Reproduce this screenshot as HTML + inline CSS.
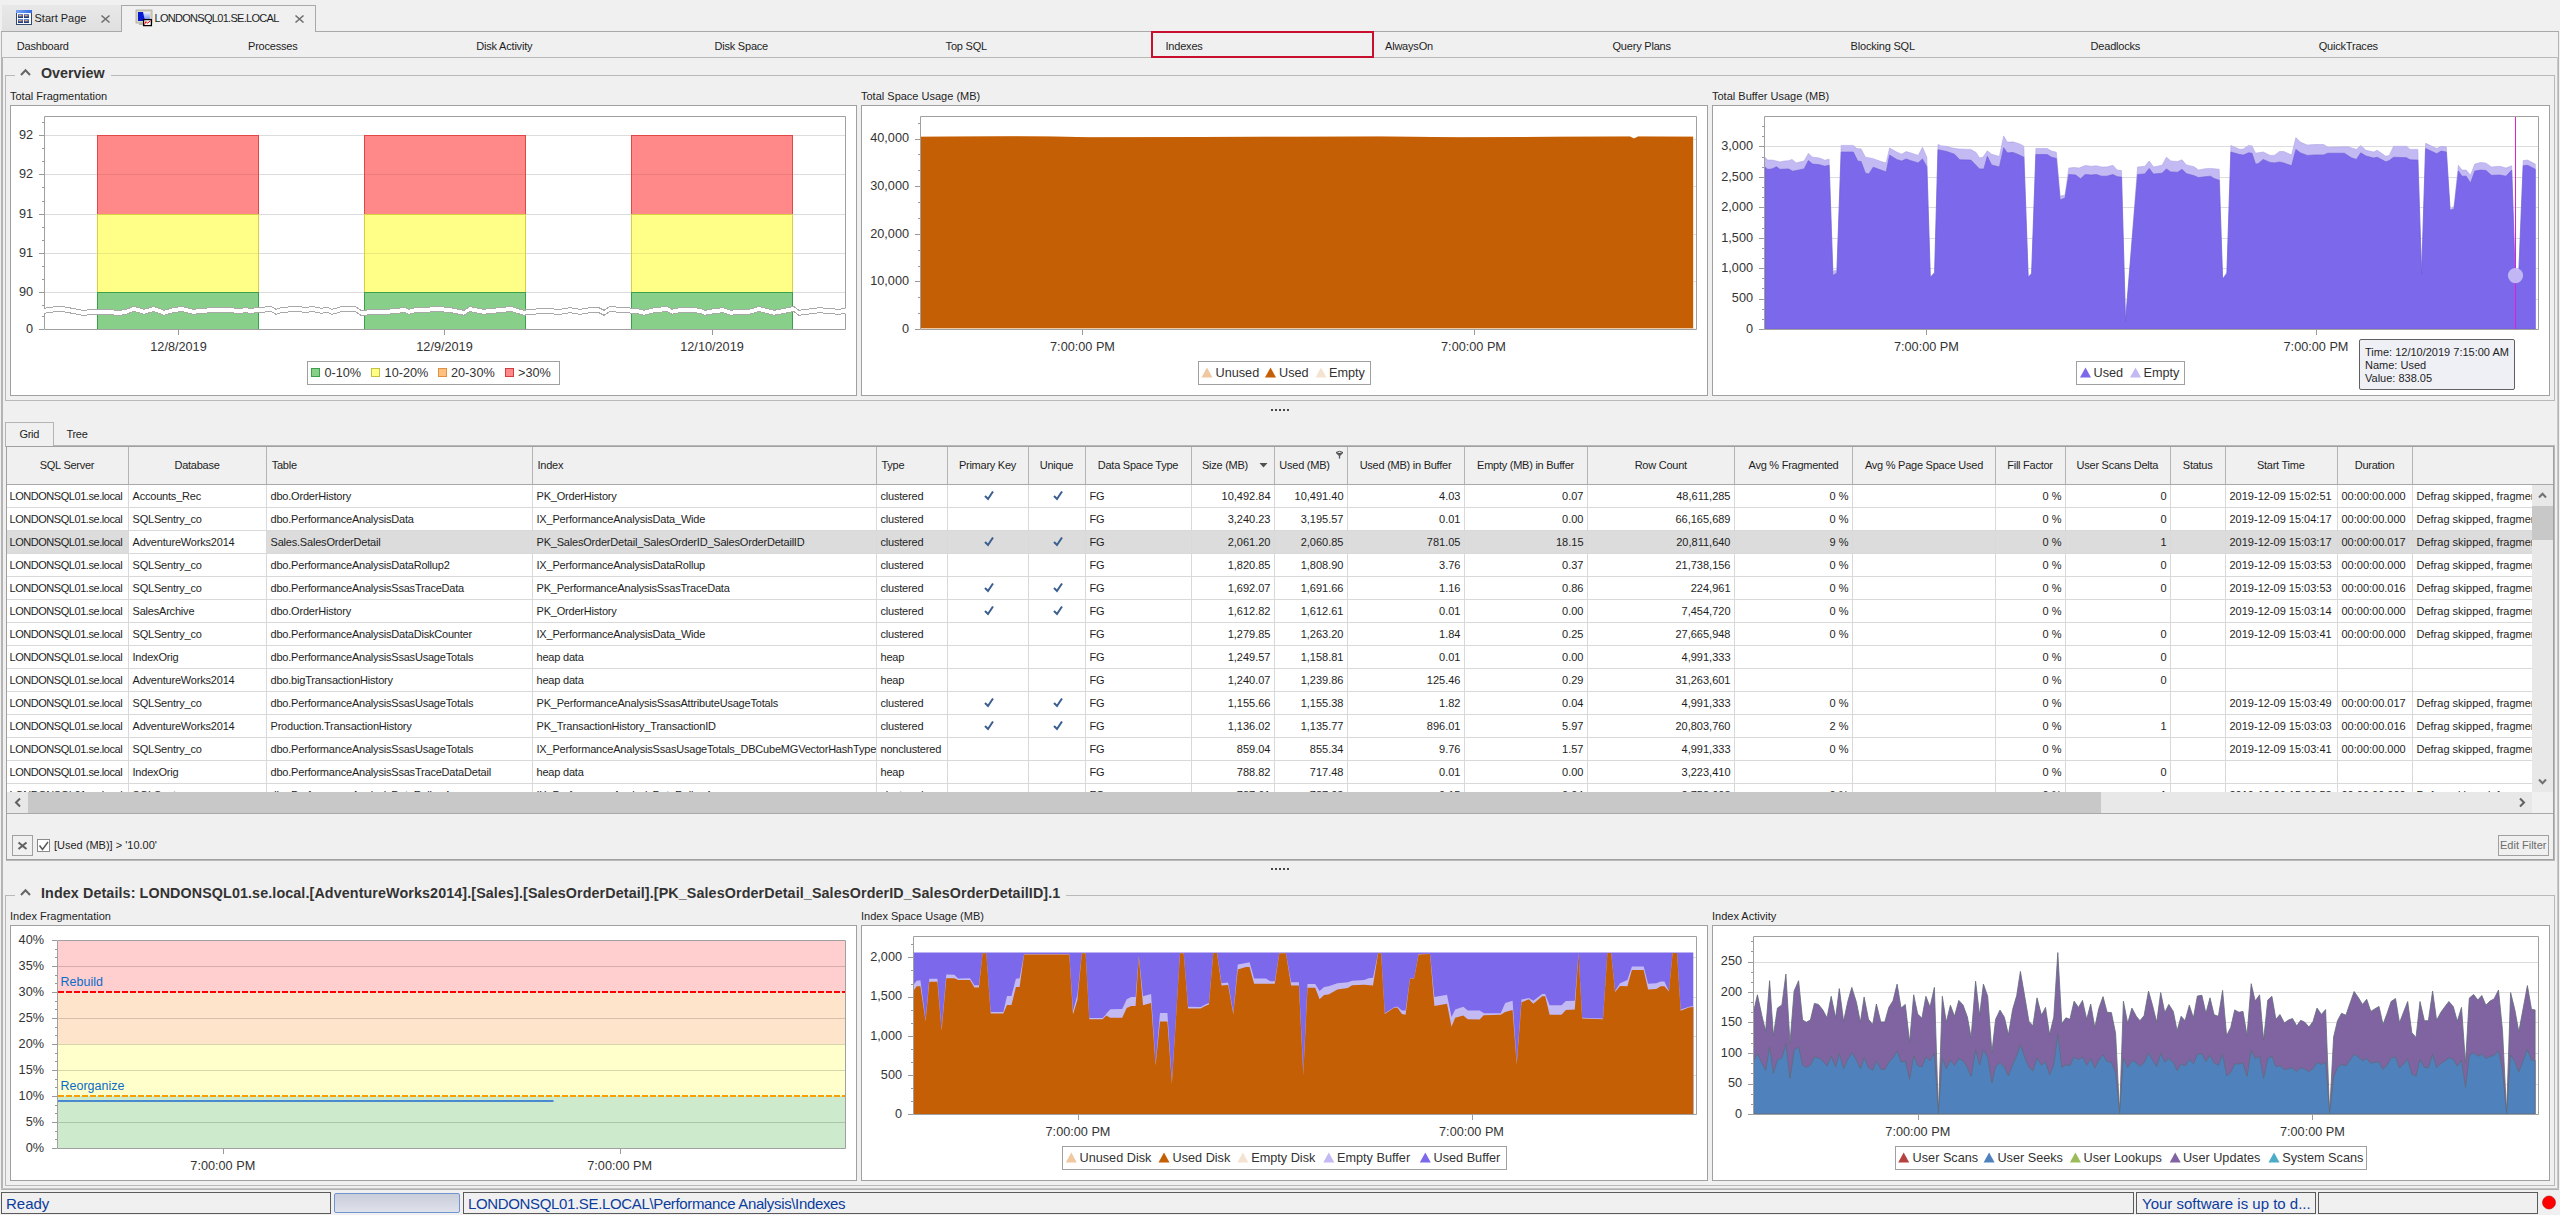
<!DOCTYPE html>
<html><head><meta charset="utf-8"><title>Indexes</title>
<style>
html,body{margin:0;padding:0;}
body{width:2560px;height:1215px;overflow:hidden;position:relative;background:#f0f0f0;font-family:"Liberation Sans", sans-serif;}
.t{position:absolute;white-space:pre;line-height:1;}
.b{position:absolute;box-sizing:border-box;}
.c{position:absolute;box-sizing:border-box;height:23px;line-height:23px;overflow:hidden;white-space:pre;font-size:11px;color:#1e1e1e;}
svg{position:absolute;left:0;top:0;}
</style></head><body>
<div class="b" style="left:2px;top:5px;width:119px;height:26px;background:linear-gradient(#e8e8e8,#e0e0e0);"></div><div class="b" style="left:121px;top:5px;width:195px;height:27px;background:#f0f0f0;border:1px solid #a9a9a9;border-bottom:none;"></div><div class="b" style="left:1px;top:31px;width:120px;height:1px;background:#a9a9a9;"></div><div class="b" style="left:316px;top:31px;width:2243px;height:1px;background:#a9a9a9;"></div><svg width="2560" height="40" style="left:0;top:0">
<defs><linearGradient id="tb" x1="0" y1="0" x2="1" y2="0"><stop offset="0" stop-color="#7aa4f4"/><stop offset="1" stop-color="#2f6ae0"/></linearGradient>
<linearGradient id="tl" x1="0" y1="0" x2="0" y2="1"><stop offset="0" stop-color="#6f8fd0"/><stop offset="1" stop-color="#17306e"/></linearGradient></defs>
<rect x="16.5" y="10.5" width="15" height="14" fill="#f4f8ff" stroke="#34496e" stroke-width="1"/>
<rect x="16" y="10" width="16" height="3" fill="url(#tb)"/>
<rect x="18" y="14" width="5" height="4" fill="url(#tl)"/><rect x="24" y="14" width="5" height="4" fill="url(#tl)"/>
<rect x="18" y="19" width="5" height="4" fill="url(#tl)"/><rect x="24" y="19" width="5" height="4" fill="url(#tl)"/>
<rect x="19" y="15" width="2.5" height="1.3" fill="#f59a50"/><rect x="25" y="15" width="2.5" height="1.3" fill="#f59a50"/>
<rect x="19" y="20" width="2.5" height="1.3" fill="#f59a50"/><rect x="25" y="20" width="2.5" height="1.3" fill="#f59a50"/>
<path d="M101.5 15.5 L109.5 22.5 M109.5 15.5 L101.5 22.5" stroke="#6e6e6e" stroke-width="1.6"/>
<path d="M295.5 15.5 L303.5 22.5 M303.5 15.5 L295.5 22.5" stroke="#6e6e6e" stroke-width="1.6"/>
<defs><linearGradient id="scr" x1="0" y1="0" x2="0" y2="1"><stop offset="0" stop-color="#eef2ff"/><stop offset="1" stop-color="#5f7ef0"/></linearGradient></defs>
<rect x="136" y="10" width="16" height="13" fill="#d8d5c4" stroke="#a8a69a" stroke-width="0.8"/>
<rect x="138" y="12" width="12" height="9" fill="url(#scr)"/>
<path d="M138 12 L143 12 L145 21 L138 21 Z" fill="#0818d0"/>
<rect x="139" y="23" width="5" height="2" fill="#b8b6aa"/>
<rect x="143.6" y="19.6" width="7.8" height="6" fill="#fff" stroke="#000" stroke-width="1.3"/>
<path d="M144.5 24.5 L146 21.5 L147.5 23.3 L150.5 20.6" stroke="#f00" stroke-width="1" fill="none"/>
</svg><div class="t" style="left:34.5px;top:12.7px;font-size:11px;color:#1e1e1e;letter-spacing:0px;">Start Page</div><div class="t" style="left:154.5px;top:12.7px;font-size:11px;color:#1e1e1e;letter-spacing:-0.7px;">LONDONSQL01.SE.LOCAL</div><div class="b" style="left:1px;top:32px;width:1px;height:1160px;background:#b4b4b4;"></div><div class="b" style="left:2px;top:57px;width:1px;height:1135px;background:#b4b4b4;"></div><div class="b" style="left:1px;top:57px;width:2558px;height:1px;background:#b9b9b9;"></div><div class="b" style="left:2558px;top:32px;width:1px;height:1160px;background:#b4b4b4;"></div><div class="b" style="left:2557px;top:57px;width:1px;height:1131px;background:#c8c8c8;"></div><div class="t" style="left:16.75px;top:40.7px;font-size:11px;color:#1e1e1e;letter-spacing:-0.2px;">Dashboard</div><div class="t" style="left:248px;top:40.7px;font-size:11px;color:#1e1e1e;letter-spacing:-0.2px;">Processes</div><div class="t" style="left:476.25px;top:40.7px;font-size:11px;color:#1e1e1e;letter-spacing:-0.2px;">Disk Activity</div><div class="t" style="left:714.4px;top:40.7px;font-size:11px;color:#1e1e1e;letter-spacing:-0.2px;">Disk Space</div><div class="t" style="left:945.6px;top:40.7px;font-size:11px;color:#1e1e1e;letter-spacing:-0.2px;">Top SQL</div><div class="t" style="left:1165.5px;top:40.7px;font-size:11px;color:#1e1e1e;letter-spacing:-0.2px;">Indexes</div><div class="t" style="left:1385px;top:40.7px;font-size:11px;color:#1e1e1e;letter-spacing:-0.2px;">AlwaysOn</div><div class="t" style="left:1612.5px;top:40.7px;font-size:11px;color:#1e1e1e;letter-spacing:-0.2px;">Query Plans</div><div class="t" style="left:1850.6px;top:40.7px;font-size:11px;color:#1e1e1e;letter-spacing:-0.2px;">Blocking SQL</div><div class="t" style="left:2090.6px;top:40.7px;font-size:11px;color:#1e1e1e;letter-spacing:-0.2px;">Deadlocks</div><div class="t" style="left:2318.75px;top:40.7px;font-size:11px;color:#1e1e1e;letter-spacing:-0.2px;">QuickTraces</div><div class="b" style="left:1151px;top:31px;width:223px;height:27px;border:2px solid #c8102e;"></div><div class="b" style="left:5px;top:75px;width:1px;height:326px;background:#b9b9b9;"></div><div class="b" style="left:5px;top:400px;width:2550px;height:1px;background:#b9b9b9;"></div><div class="b" style="left:2554px;top:75px;width:1px;height:326px;background:#b9b9b9;"></div><div class="b" style="left:5px;top:75px;width:10px;height:1px;background:#b9b9b9;"></div><div class="b" style="left:111px;top:75px;width:2444px;height:1px;background:#b9b9b9;"></div><svg width="40" height="90" style="left:0;top:0"><path d="M21 75 L25.5 70.3 L30 75" stroke="#666" stroke-width="2" fill="none"/></svg><div class="t" style="left:41px;top:66.4px;font-size:14.3px;color:#333333;font-weight:700;">Overview</div><div class="b" style="left:5px;top:895px;width:1px;height:291px;background:#b9b9b9;"></div><div class="b" style="left:5px;top:1185px;width:2550px;height:1px;background:#b9b9b9;"></div><div class="b" style="left:2554px;top:895px;width:1px;height:291px;background:#b9b9b9;"></div><div class="b" style="left:5px;top:895px;width:10px;height:1px;background:#b9b9b9;"></div><div class="b" style="left:1066px;top:895px;width:1489px;height:1px;background:#b9b9b9;"></div><svg width="40" height="910" style="left:0;top:0"><path d="M21 895 L25.5 890.3 L30 895" stroke="#666" stroke-width="2" fill="none"/></svg><div class="t" style="left:41px;top:886.4px;font-size:14.3px;color:#333333;font-weight:700;letter-spacing:0.11px;">Index Details: LONDONSQL01.se.local.[AdventureWorks2014].[Sales].[SalesOrderDetail].[PK_SalesOrderDetail_SalesOrderID_SalesOrderDetailID].1</div><div class="b" style="left:1271px;top:409px;width:2px;height:2px;background:#484848;"></div><div class="b" style="left:1275px;top:409px;width:2px;height:2px;background:#484848;"></div><div class="b" style="left:1279px;top:409px;width:2px;height:2px;background:#484848;"></div><div class="b" style="left:1283px;top:409px;width:2px;height:2px;background:#484848;"></div><div class="b" style="left:1287px;top:409px;width:2px;height:2px;background:#484848;"></div><div class="b" style="left:1271px;top:868px;width:2px;height:2px;background:#484848;"></div><div class="b" style="left:1275px;top:868px;width:2px;height:2px;background:#484848;"></div><div class="b" style="left:1279px;top:868px;width:2px;height:2px;background:#484848;"></div><div class="b" style="left:1283px;top:868px;width:2px;height:2px;background:#484848;"></div><div class="b" style="left:1287px;top:868px;width:2px;height:2px;background:#484848;"></div><div class="t" style="left:10px;top:90.7px;font-size:11px;color:#1e1e1e;">Total Fragmentation</div><div class="b" style="left:10px;top:105px;width:847px;height:291px;background:#fff;border:1px solid #a0a0a0;"></div><div class="b" style="left:307px;top:361px;width:253px;height:24px;background:#fff;border:1px solid #a0a0a0;"></div><div class="t" style="left:861px;top:90.7px;font-size:11px;color:#1e1e1e;">Total Space Usage (MB)</div><div class="b" style="left:861px;top:105px;width:847px;height:291px;background:#fff;border:1px solid #a0a0a0;"></div><div class="b" style="left:1198px;top:361px;width:173px;height:24px;background:#fff;border:1px solid #a0a0a0;"></div><div class="t" style="left:1712px;top:90.7px;font-size:11px;color:#1e1e1e;">Total Buffer Usage (MB)</div><div class="b" style="left:1712px;top:105px;width:838px;height:291px;background:#fff;border:1px solid #a0a0a0;"></div><div class="b" style="left:2076px;top:361px;width:109px;height:24px;background:#fff;border:1px solid #a0a0a0;"></div><div class="b" style="left:5px;top:422px;width:49px;height:25px;background:#f0f0f0;border:1px solid #b4b4b4;border-bottom:none;"></div><div class="t" style="left:19.5px;top:428.7px;font-size:11px;color:#1e1e1e;letter-spacing:-0.3px;">Grid</div><div class="t" style="left:66.5px;top:428.7px;font-size:11px;color:#1e1e1e;letter-spacing:-0.3px;">Tree</div><div class="b" style="left:6px;top:446px;width:2548px;height:414px;background:#fff;border:1px solid #a0a0a0;"></div><div class="b" style="left:7px;top:447px;width:2546px;height:37px;background:#f0f0f0;"></div><div class="b" style="left:54px;top:445px;width:2500px;height:1px;background:#b8b8b8;"></div><div class="b" style="left:2554px;top:445px;width:1px;height:415px;background:#b8b8b8;"></div><div class="b" style="left:6px;top:860px;width:2549px;height:1px;background:#b8b8b8;"></div><div class="b" style="left:7px;top:484px;width:2546px;height:1px;background:#a9a9a9;"></div><div class="b" style="left:128px;top:447px;width:1px;height:37px;background:#b4b4b4;"></div><div class="b" style="left:266px;top:447px;width:1px;height:37px;background:#b4b4b4;"></div><div class="b" style="left:532px;top:447px;width:1px;height:37px;background:#b4b4b4;"></div><div class="b" style="left:876px;top:447px;width:1px;height:37px;background:#b4b4b4;"></div><div class="b" style="left:947px;top:447px;width:1px;height:37px;background:#b4b4b4;"></div><div class="b" style="left:1028px;top:447px;width:1px;height:37px;background:#b4b4b4;"></div><div class="b" style="left:1085px;top:447px;width:1px;height:37px;background:#b4b4b4;"></div><div class="b" style="left:1191px;top:447px;width:1px;height:37px;background:#b4b4b4;"></div><div class="b" style="left:1274px;top:447px;width:1px;height:37px;background:#b4b4b4;"></div><div class="b" style="left:1347px;top:447px;width:1px;height:37px;background:#b4b4b4;"></div><div class="b" style="left:1464px;top:447px;width:1px;height:37px;background:#b4b4b4;"></div><div class="b" style="left:1587px;top:447px;width:1px;height:37px;background:#b4b4b4;"></div><div class="b" style="left:1734px;top:447px;width:1px;height:37px;background:#b4b4b4;"></div><div class="b" style="left:1852px;top:447px;width:1px;height:37px;background:#b4b4b4;"></div><div class="b" style="left:1995px;top:447px;width:1px;height:37px;background:#b4b4b4;"></div><div class="b" style="left:2065px;top:447px;width:1px;height:37px;background:#b4b4b4;"></div><div class="b" style="left:2170px;top:447px;width:1px;height:37px;background:#b4b4b4;"></div><div class="b" style="left:2225px;top:447px;width:1px;height:37px;background:#b4b4b4;"></div><div class="b" style="left:2337px;top:447px;width:1px;height:37px;background:#b4b4b4;"></div><div class="b" style="left:2412px;top:447px;width:1px;height:37px;background:#b4b4b4;"></div><div class="t" style="left:-233.0px;width:600px;text-align:center;top:460.2px;font-size:11px;color:#1e1e1e;letter-spacing:-0.25px;">SQL Server</div><div class="t" style="left:-103.0px;width:600px;text-align:center;top:460.2px;font-size:11px;color:#1e1e1e;letter-spacing:-0.25px;">Database</div><div class="t" style="left:271.75px;top:460.2px;font-size:11px;color:#1e1e1e;letter-spacing:-0.25px;">Table</div><div class="t" style="left:537.5px;top:460.2px;font-size:11px;color:#1e1e1e;letter-spacing:-0.25px;">Index</div><div class="t" style="left:881.5px;top:460.2px;font-size:11px;color:#1e1e1e;letter-spacing:-0.25px;">Type</div><div class="t" style="left:687.5px;width:600px;text-align:center;top:460.2px;font-size:11px;color:#1e1e1e;letter-spacing:-0.25px;">Primary Key</div><div class="t" style="left:756.5px;width:600px;text-align:center;top:460.2px;font-size:11px;color:#1e1e1e;letter-spacing:-0.25px;">Unique</div><div class="t" style="left:838.0px;width:600px;text-align:center;top:460.2px;font-size:11px;color:#1e1e1e;letter-spacing:-0.25px;">Data Space Type</div><div class="t" style="left:925.0px;width:600px;text-align:center;top:460.2px;font-size:11px;color:#1e1e1e;letter-spacing:-0.25px;">Size (MB)</div><div class="t" style="left:1004.5px;width:600px;text-align:center;top:460.2px;font-size:11px;color:#1e1e1e;letter-spacing:-0.25px;">Used (MB)</div><div class="t" style="left:1105.5px;width:600px;text-align:center;top:460.2px;font-size:11px;color:#1e1e1e;letter-spacing:-0.25px;">Used (MB) in Buffer</div><div class="t" style="left:1225.5px;width:600px;text-align:center;top:460.2px;font-size:11px;color:#1e1e1e;letter-spacing:-0.25px;">Empty (MB) in Buffer</div><div class="t" style="left:1360.75px;width:600px;text-align:center;top:460.2px;font-size:11px;color:#1e1e1e;letter-spacing:-0.25px;">Row Count</div><div class="t" style="left:1493.5px;width:600px;text-align:center;top:460.2px;font-size:11px;color:#1e1e1e;letter-spacing:-0.25px;">Avg % Fragmented</div><div class="t" style="left:1624.0px;width:600px;text-align:center;top:460.2px;font-size:11px;color:#1e1e1e;letter-spacing:-0.25px;">Avg % Page Space Used</div><div class="t" style="left:1730.0px;width:600px;text-align:center;top:460.2px;font-size:11px;color:#1e1e1e;letter-spacing:-0.25px;">Fill Factor</div><div class="t" style="left:1817.4px;width:600px;text-align:center;top:460.2px;font-size:11px;color:#1e1e1e;letter-spacing:-0.25px;">User Scans Delta</div><div class="t" style="left:1897.65px;width:600px;text-align:center;top:460.2px;font-size:11px;color:#1e1e1e;letter-spacing:-0.25px;">Status</div><div class="t" style="left:1980.75px;width:600px;text-align:center;top:460.2px;font-size:11px;color:#1e1e1e;letter-spacing:-0.25px;">Start Time</div><div class="t" style="left:2074.5px;width:600px;text-align:center;top:460.2px;font-size:11px;color:#1e1e1e;letter-spacing:-0.25px;">Duration</div><svg width="2560" height="500" style="left:0;top:0"><path d="M1259.5 463 L1267.5 463 L1263.5 467.5 Z" fill="#505050"/><path d="M1336 452.5 Q1339.5 450 1343 452.5 Q1339.5 454.6 1336 452.5 Z" fill="none" stroke="#555" stroke-width="1"/><path d="M1336.3 453 L1339.5 456 L1342.7 453" fill="#555" stroke="#555" stroke-width="0.8"/><path d="M1339.5 455.5 V458.5" stroke="#555" stroke-width="1.3"/></svg><div style="position:absolute;left:0;top:0;width:2560px;height:1215px;clip-path:inset(485px 27px 423px 7px);"><div class="c" style="left:7px;top:485px;width:121px;letter-spacing:-0.45px;padding-left:2.5px;">LONDONSQL01.se.local</div><div class="c" style="left:129px;top:485px;width:137px;letter-spacing:-0.2px;padding-left:3.5px;">Accounts_Rec</div><div class="c" style="left:267px;top:485px;width:265px;letter-spacing:-0.2px;padding-left:3.5px;">dbo.OrderHistory</div><div class="c" style="left:533px;top:485px;width:343px;letter-spacing:-0.2px;padding-left:3.5px;">PK_OrderHistory</div><div class="c" style="left:877px;top:485px;width:70px;letter-spacing:-0.2px;padding-left:3.5px;">clustered</div><svg width="14" height="14" style="position:absolute;left:982.5px;top:489px"><path d="M2 7 L5 10 L10 2.5" fill="none" stroke="#3a5f8f" stroke-width="2"/></svg><svg width="14" height="14" style="position:absolute;left:1051.5px;top:489px"><path d="M2 7 L5 10 L10 2.5" fill="none" stroke="#3a5f8f" stroke-width="2"/></svg><div class="c" style="left:1086px;top:485px;width:105px;letter-spacing:-0.2px;padding-left:3.5px;">FG</div><div class="c" style="left:1192px;top:485px;width:82px;letter-spacing:0px;text-align:right;padding-right:3.5px;">10,492.84</div><div class="c" style="left:1275px;top:485px;width:72px;letter-spacing:0px;text-align:right;padding-right:3.5px;">10,491.40</div><div class="c" style="left:1348px;top:485px;width:116px;letter-spacing:0px;text-align:right;padding-right:3.5px;">4.03</div><div class="c" style="left:1465px;top:485px;width:122px;letter-spacing:0px;text-align:right;padding-right:3.5px;">0.07</div><div class="c" style="left:1588px;top:485px;width:146px;letter-spacing:0px;text-align:right;padding-right:3.5px;">48,611,285</div><div class="c" style="left:1735px;top:485px;width:117px;letter-spacing:0px;text-align:right;padding-right:3.5px;">0 %</div><div class="c" style="left:1996px;top:485px;width:69px;letter-spacing:0px;text-align:right;padding-right:3.5px;">0 %</div><div class="c" style="left:2066px;top:485px;width:104px;letter-spacing:0px;text-align:right;padding-right:3.5px;">0</div><div class="c" style="left:2226px;top:485px;width:111px;letter-spacing:0px;padding-left:3.5px;">2019-12-09 15:02:51</div><div class="c" style="left:2338px;top:485px;width:74px;letter-spacing:0px;padding-left:3.5px;">00:00:00.000</div><div class="c" style="left:2413px;top:485px;width:140px;letter-spacing:0px;padding-left:3.5px;">Defrag skipped, fragmentation level below threshold</div><div class="b" style="left:7px;top:507px;width:2525px;height:1px;background:#d9d9d9"></div><div class="c" style="left:7px;top:508px;width:121px;letter-spacing:-0.45px;padding-left:2.5px;">LONDONSQL01.se.local</div><div class="c" style="left:129px;top:508px;width:137px;letter-spacing:-0.2px;padding-left:3.5px;">SQLSentry_co</div><div class="c" style="left:267px;top:508px;width:265px;letter-spacing:-0.2px;padding-left:3.5px;">dbo.PerformanceAnalysisData</div><div class="c" style="left:533px;top:508px;width:343px;letter-spacing:-0.2px;padding-left:3.5px;">IX_PerformanceAnalysisData_Wide</div><div class="c" style="left:877px;top:508px;width:70px;letter-spacing:-0.2px;padding-left:3.5px;">clustered</div><div class="c" style="left:1086px;top:508px;width:105px;letter-spacing:-0.2px;padding-left:3.5px;">FG</div><div class="c" style="left:1192px;top:508px;width:82px;letter-spacing:0px;text-align:right;padding-right:3.5px;">3,240.23</div><div class="c" style="left:1275px;top:508px;width:72px;letter-spacing:0px;text-align:right;padding-right:3.5px;">3,195.57</div><div class="c" style="left:1348px;top:508px;width:116px;letter-spacing:0px;text-align:right;padding-right:3.5px;">0.01</div><div class="c" style="left:1465px;top:508px;width:122px;letter-spacing:0px;text-align:right;padding-right:3.5px;">0.00</div><div class="c" style="left:1588px;top:508px;width:146px;letter-spacing:0px;text-align:right;padding-right:3.5px;">66,165,689</div><div class="c" style="left:1735px;top:508px;width:117px;letter-spacing:0px;text-align:right;padding-right:3.5px;">0 %</div><div class="c" style="left:1996px;top:508px;width:69px;letter-spacing:0px;text-align:right;padding-right:3.5px;">0 %</div><div class="c" style="left:2066px;top:508px;width:104px;letter-spacing:0px;text-align:right;padding-right:3.5px;">0</div><div class="c" style="left:2226px;top:508px;width:111px;letter-spacing:0px;padding-left:3.5px;">2019-12-09 15:04:17</div><div class="c" style="left:2338px;top:508px;width:74px;letter-spacing:0px;padding-left:3.5px;">00:00:00.000</div><div class="c" style="left:2413px;top:508px;width:140px;letter-spacing:0px;padding-left:3.5px;">Defrag skipped, fragmentation level below threshold</div><div class="b" style="left:7px;top:530px;width:2525px;height:1px;background:#d9d9d9"></div><div class="b" style="left:7px;top:531px;width:2525px;height:22px;background:#dcdcdc"></div><div class="b" style="left:129px;top:531px;width:137px;height:22px;background:#fff"></div><div class="c" style="left:7px;top:531px;width:121px;letter-spacing:-0.45px;padding-left:2.5px;">LONDONSQL01.se.local</div><div class="c" style="left:129px;top:531px;width:137px;letter-spacing:-0.2px;padding-left:3.5px;">AdventureWorks2014</div><div class="c" style="left:267px;top:531px;width:265px;letter-spacing:-0.2px;padding-left:3.5px;">Sales.SalesOrderDetail</div><div class="c" style="left:533px;top:531px;width:343px;letter-spacing:-0.2px;padding-left:3.5px;">PK_SalesOrderDetail_SalesOrderID_SalesOrderDetailID</div><div class="c" style="left:877px;top:531px;width:70px;letter-spacing:-0.2px;padding-left:3.5px;">clustered</div><svg width="14" height="14" style="position:absolute;left:982.5px;top:535px"><path d="M2 7 L5 10 L10 2.5" fill="none" stroke="#3a5f8f" stroke-width="2"/></svg><svg width="14" height="14" style="position:absolute;left:1051.5px;top:535px"><path d="M2 7 L5 10 L10 2.5" fill="none" stroke="#3a5f8f" stroke-width="2"/></svg><div class="c" style="left:1086px;top:531px;width:105px;letter-spacing:-0.2px;padding-left:3.5px;">FG</div><div class="c" style="left:1192px;top:531px;width:82px;letter-spacing:0px;text-align:right;padding-right:3.5px;">2,061.20</div><div class="c" style="left:1275px;top:531px;width:72px;letter-spacing:0px;text-align:right;padding-right:3.5px;">2,060.85</div><div class="c" style="left:1348px;top:531px;width:116px;letter-spacing:0px;text-align:right;padding-right:3.5px;">781.05</div><div class="c" style="left:1465px;top:531px;width:122px;letter-spacing:0px;text-align:right;padding-right:3.5px;">18.15</div><div class="c" style="left:1588px;top:531px;width:146px;letter-spacing:0px;text-align:right;padding-right:3.5px;">20,811,640</div><div class="c" style="left:1735px;top:531px;width:117px;letter-spacing:0px;text-align:right;padding-right:3.5px;">9 %</div><div class="c" style="left:1996px;top:531px;width:69px;letter-spacing:0px;text-align:right;padding-right:3.5px;">0 %</div><div class="c" style="left:2066px;top:531px;width:104px;letter-spacing:0px;text-align:right;padding-right:3.5px;">1</div><div class="c" style="left:2226px;top:531px;width:111px;letter-spacing:0px;padding-left:3.5px;">2019-12-09 15:03:17</div><div class="c" style="left:2338px;top:531px;width:74px;letter-spacing:0px;padding-left:3.5px;">00:00:00.017</div><div class="c" style="left:2413px;top:531px;width:140px;letter-spacing:0px;padding-left:3.5px;">Defrag skipped, fragmentation level below threshold</div><div class="b" style="left:7px;top:553px;width:2525px;height:1px;background:#d9d9d9"></div><div class="c" style="left:7px;top:554px;width:121px;letter-spacing:-0.45px;padding-left:2.5px;">LONDONSQL01.se.local</div><div class="c" style="left:129px;top:554px;width:137px;letter-spacing:-0.2px;padding-left:3.5px;">SQLSentry_co</div><div class="c" style="left:267px;top:554px;width:265px;letter-spacing:-0.2px;padding-left:3.5px;">dbo.PerformanceAnalysisDataRollup2</div><div class="c" style="left:533px;top:554px;width:343px;letter-spacing:-0.2px;padding-left:3.5px;">IX_PerformanceAnalysisDataRollup</div><div class="c" style="left:877px;top:554px;width:70px;letter-spacing:-0.2px;padding-left:3.5px;">clustered</div><div class="c" style="left:1086px;top:554px;width:105px;letter-spacing:-0.2px;padding-left:3.5px;">FG</div><div class="c" style="left:1192px;top:554px;width:82px;letter-spacing:0px;text-align:right;padding-right:3.5px;">1,820.85</div><div class="c" style="left:1275px;top:554px;width:72px;letter-spacing:0px;text-align:right;padding-right:3.5px;">1,808.90</div><div class="c" style="left:1348px;top:554px;width:116px;letter-spacing:0px;text-align:right;padding-right:3.5px;">3.76</div><div class="c" style="left:1465px;top:554px;width:122px;letter-spacing:0px;text-align:right;padding-right:3.5px;">0.37</div><div class="c" style="left:1588px;top:554px;width:146px;letter-spacing:0px;text-align:right;padding-right:3.5px;">21,738,156</div><div class="c" style="left:1735px;top:554px;width:117px;letter-spacing:0px;text-align:right;padding-right:3.5px;">0 %</div><div class="c" style="left:1996px;top:554px;width:69px;letter-spacing:0px;text-align:right;padding-right:3.5px;">0 %</div><div class="c" style="left:2066px;top:554px;width:104px;letter-spacing:0px;text-align:right;padding-right:3.5px;">0</div><div class="c" style="left:2226px;top:554px;width:111px;letter-spacing:0px;padding-left:3.5px;">2019-12-09 15:03:53</div><div class="c" style="left:2338px;top:554px;width:74px;letter-spacing:0px;padding-left:3.5px;">00:00:00.000</div><div class="c" style="left:2413px;top:554px;width:140px;letter-spacing:0px;padding-left:3.5px;">Defrag skipped, fragmentation level below threshold</div><div class="b" style="left:7px;top:576px;width:2525px;height:1px;background:#d9d9d9"></div><div class="c" style="left:7px;top:577px;width:121px;letter-spacing:-0.45px;padding-left:2.5px;">LONDONSQL01.se.local</div><div class="c" style="left:129px;top:577px;width:137px;letter-spacing:-0.2px;padding-left:3.5px;">SQLSentry_co</div><div class="c" style="left:267px;top:577px;width:265px;letter-spacing:-0.2px;padding-left:3.5px;">dbo.PerformanceAnalysisSsasTraceData</div><div class="c" style="left:533px;top:577px;width:343px;letter-spacing:-0.2px;padding-left:3.5px;">PK_PerformanceAnalysisSsasTraceData</div><div class="c" style="left:877px;top:577px;width:70px;letter-spacing:-0.2px;padding-left:3.5px;">clustered</div><svg width="14" height="14" style="position:absolute;left:982.5px;top:581px"><path d="M2 7 L5 10 L10 2.5" fill="none" stroke="#3a5f8f" stroke-width="2"/></svg><svg width="14" height="14" style="position:absolute;left:1051.5px;top:581px"><path d="M2 7 L5 10 L10 2.5" fill="none" stroke="#3a5f8f" stroke-width="2"/></svg><div class="c" style="left:1086px;top:577px;width:105px;letter-spacing:-0.2px;padding-left:3.5px;">FG</div><div class="c" style="left:1192px;top:577px;width:82px;letter-spacing:0px;text-align:right;padding-right:3.5px;">1,692.07</div><div class="c" style="left:1275px;top:577px;width:72px;letter-spacing:0px;text-align:right;padding-right:3.5px;">1,691.66</div><div class="c" style="left:1348px;top:577px;width:116px;letter-spacing:0px;text-align:right;padding-right:3.5px;">1.16</div><div class="c" style="left:1465px;top:577px;width:122px;letter-spacing:0px;text-align:right;padding-right:3.5px;">0.86</div><div class="c" style="left:1588px;top:577px;width:146px;letter-spacing:0px;text-align:right;padding-right:3.5px;">224,961</div><div class="c" style="left:1735px;top:577px;width:117px;letter-spacing:0px;text-align:right;padding-right:3.5px;">0 %</div><div class="c" style="left:1996px;top:577px;width:69px;letter-spacing:0px;text-align:right;padding-right:3.5px;">0 %</div><div class="c" style="left:2066px;top:577px;width:104px;letter-spacing:0px;text-align:right;padding-right:3.5px;">0</div><div class="c" style="left:2226px;top:577px;width:111px;letter-spacing:0px;padding-left:3.5px;">2019-12-09 15:03:53</div><div class="c" style="left:2338px;top:577px;width:74px;letter-spacing:0px;padding-left:3.5px;">00:00:00.016</div><div class="c" style="left:2413px;top:577px;width:140px;letter-spacing:0px;padding-left:3.5px;">Defrag skipped, fragmentation level below threshold</div><div class="b" style="left:7px;top:599px;width:2525px;height:1px;background:#d9d9d9"></div><div class="c" style="left:7px;top:600px;width:121px;letter-spacing:-0.45px;padding-left:2.5px;">LONDONSQL01.se.local</div><div class="c" style="left:129px;top:600px;width:137px;letter-spacing:-0.2px;padding-left:3.5px;">SalesArchive</div><div class="c" style="left:267px;top:600px;width:265px;letter-spacing:-0.2px;padding-left:3.5px;">dbo.OrderHistory</div><div class="c" style="left:533px;top:600px;width:343px;letter-spacing:-0.2px;padding-left:3.5px;">PK_OrderHistory</div><div class="c" style="left:877px;top:600px;width:70px;letter-spacing:-0.2px;padding-left:3.5px;">clustered</div><svg width="14" height="14" style="position:absolute;left:982.5px;top:604px"><path d="M2 7 L5 10 L10 2.5" fill="none" stroke="#3a5f8f" stroke-width="2"/></svg><svg width="14" height="14" style="position:absolute;left:1051.5px;top:604px"><path d="M2 7 L5 10 L10 2.5" fill="none" stroke="#3a5f8f" stroke-width="2"/></svg><div class="c" style="left:1086px;top:600px;width:105px;letter-spacing:-0.2px;padding-left:3.5px;">FG</div><div class="c" style="left:1192px;top:600px;width:82px;letter-spacing:0px;text-align:right;padding-right:3.5px;">1,612.82</div><div class="c" style="left:1275px;top:600px;width:72px;letter-spacing:0px;text-align:right;padding-right:3.5px;">1,612.61</div><div class="c" style="left:1348px;top:600px;width:116px;letter-spacing:0px;text-align:right;padding-right:3.5px;">0.01</div><div class="c" style="left:1465px;top:600px;width:122px;letter-spacing:0px;text-align:right;padding-right:3.5px;">0.00</div><div class="c" style="left:1588px;top:600px;width:146px;letter-spacing:0px;text-align:right;padding-right:3.5px;">7,454,720</div><div class="c" style="left:1735px;top:600px;width:117px;letter-spacing:0px;text-align:right;padding-right:3.5px;">0 %</div><div class="c" style="left:1996px;top:600px;width:69px;letter-spacing:0px;text-align:right;padding-right:3.5px;">0 %</div><div class="c" style="left:2226px;top:600px;width:111px;letter-spacing:0px;padding-left:3.5px;">2019-12-09 15:03:14</div><div class="c" style="left:2338px;top:600px;width:74px;letter-spacing:0px;padding-left:3.5px;">00:00:00.000</div><div class="c" style="left:2413px;top:600px;width:140px;letter-spacing:0px;padding-left:3.5px;">Defrag skipped, fragmentation level below threshold</div><div class="b" style="left:7px;top:622px;width:2525px;height:1px;background:#d9d9d9"></div><div class="c" style="left:7px;top:623px;width:121px;letter-spacing:-0.45px;padding-left:2.5px;">LONDONSQL01.se.local</div><div class="c" style="left:129px;top:623px;width:137px;letter-spacing:-0.2px;padding-left:3.5px;">SQLSentry_co</div><div class="c" style="left:267px;top:623px;width:265px;letter-spacing:-0.2px;padding-left:3.5px;">dbo.PerformanceAnalysisDataDiskCounter</div><div class="c" style="left:533px;top:623px;width:343px;letter-spacing:-0.2px;padding-left:3.5px;">IX_PerformanceAnalysisData_Wide</div><div class="c" style="left:877px;top:623px;width:70px;letter-spacing:-0.2px;padding-left:3.5px;">clustered</div><div class="c" style="left:1086px;top:623px;width:105px;letter-spacing:-0.2px;padding-left:3.5px;">FG</div><div class="c" style="left:1192px;top:623px;width:82px;letter-spacing:0px;text-align:right;padding-right:3.5px;">1,279.85</div><div class="c" style="left:1275px;top:623px;width:72px;letter-spacing:0px;text-align:right;padding-right:3.5px;">1,263.20</div><div class="c" style="left:1348px;top:623px;width:116px;letter-spacing:0px;text-align:right;padding-right:3.5px;">1.84</div><div class="c" style="left:1465px;top:623px;width:122px;letter-spacing:0px;text-align:right;padding-right:3.5px;">0.25</div><div class="c" style="left:1588px;top:623px;width:146px;letter-spacing:0px;text-align:right;padding-right:3.5px;">27,665,948</div><div class="c" style="left:1735px;top:623px;width:117px;letter-spacing:0px;text-align:right;padding-right:3.5px;">0 %</div><div class="c" style="left:1996px;top:623px;width:69px;letter-spacing:0px;text-align:right;padding-right:3.5px;">0 %</div><div class="c" style="left:2066px;top:623px;width:104px;letter-spacing:0px;text-align:right;padding-right:3.5px;">0</div><div class="c" style="left:2226px;top:623px;width:111px;letter-spacing:0px;padding-left:3.5px;">2019-12-09 15:03:41</div><div class="c" style="left:2338px;top:623px;width:74px;letter-spacing:0px;padding-left:3.5px;">00:00:00.000</div><div class="c" style="left:2413px;top:623px;width:140px;letter-spacing:0px;padding-left:3.5px;">Defrag skipped, fragmentation level below threshold</div><div class="b" style="left:7px;top:645px;width:2525px;height:1px;background:#d9d9d9"></div><div class="c" style="left:7px;top:646px;width:121px;letter-spacing:-0.45px;padding-left:2.5px;">LONDONSQL01.se.local</div><div class="c" style="left:129px;top:646px;width:137px;letter-spacing:-0.2px;padding-left:3.5px;">IndexOrig</div><div class="c" style="left:267px;top:646px;width:265px;letter-spacing:-0.2px;padding-left:3.5px;">dbo.PerformanceAnalysisSsasUsageTotals</div><div class="c" style="left:533px;top:646px;width:343px;letter-spacing:-0.2px;padding-left:3.5px;">heap data</div><div class="c" style="left:877px;top:646px;width:70px;letter-spacing:-0.2px;padding-left:3.5px;">heap</div><div class="c" style="left:1086px;top:646px;width:105px;letter-spacing:-0.2px;padding-left:3.5px;">FG</div><div class="c" style="left:1192px;top:646px;width:82px;letter-spacing:0px;text-align:right;padding-right:3.5px;">1,249.57</div><div class="c" style="left:1275px;top:646px;width:72px;letter-spacing:0px;text-align:right;padding-right:3.5px;">1,158.81</div><div class="c" style="left:1348px;top:646px;width:116px;letter-spacing:0px;text-align:right;padding-right:3.5px;">0.01</div><div class="c" style="left:1465px;top:646px;width:122px;letter-spacing:0px;text-align:right;padding-right:3.5px;">0.00</div><div class="c" style="left:1588px;top:646px;width:146px;letter-spacing:0px;text-align:right;padding-right:3.5px;">4,991,333</div><div class="c" style="left:1996px;top:646px;width:69px;letter-spacing:0px;text-align:right;padding-right:3.5px;">0 %</div><div class="c" style="left:2066px;top:646px;width:104px;letter-spacing:0px;text-align:right;padding-right:3.5px;">0</div><div class="b" style="left:7px;top:668px;width:2525px;height:1px;background:#d9d9d9"></div><div class="c" style="left:7px;top:669px;width:121px;letter-spacing:-0.45px;padding-left:2.5px;">LONDONSQL01.se.local</div><div class="c" style="left:129px;top:669px;width:137px;letter-spacing:-0.2px;padding-left:3.5px;">AdventureWorks2014</div><div class="c" style="left:267px;top:669px;width:265px;letter-spacing:-0.2px;padding-left:3.5px;">dbo.bigTransactionHistory</div><div class="c" style="left:533px;top:669px;width:343px;letter-spacing:-0.2px;padding-left:3.5px;">heap data</div><div class="c" style="left:877px;top:669px;width:70px;letter-spacing:-0.2px;padding-left:3.5px;">heap</div><div class="c" style="left:1086px;top:669px;width:105px;letter-spacing:-0.2px;padding-left:3.5px;">FG</div><div class="c" style="left:1192px;top:669px;width:82px;letter-spacing:0px;text-align:right;padding-right:3.5px;">1,240.07</div><div class="c" style="left:1275px;top:669px;width:72px;letter-spacing:0px;text-align:right;padding-right:3.5px;">1,239.86</div><div class="c" style="left:1348px;top:669px;width:116px;letter-spacing:0px;text-align:right;padding-right:3.5px;">125.46</div><div class="c" style="left:1465px;top:669px;width:122px;letter-spacing:0px;text-align:right;padding-right:3.5px;">0.29</div><div class="c" style="left:1588px;top:669px;width:146px;letter-spacing:0px;text-align:right;padding-right:3.5px;">31,263,601</div><div class="c" style="left:1996px;top:669px;width:69px;letter-spacing:0px;text-align:right;padding-right:3.5px;">0 %</div><div class="c" style="left:2066px;top:669px;width:104px;letter-spacing:0px;text-align:right;padding-right:3.5px;">0</div><div class="b" style="left:7px;top:691px;width:2525px;height:1px;background:#d9d9d9"></div><div class="c" style="left:7px;top:692px;width:121px;letter-spacing:-0.45px;padding-left:2.5px;">LONDONSQL01.se.local</div><div class="c" style="left:129px;top:692px;width:137px;letter-spacing:-0.2px;padding-left:3.5px;">SQLSentry_co</div><div class="c" style="left:267px;top:692px;width:265px;letter-spacing:-0.2px;padding-left:3.5px;">dbo.PerformanceAnalysisSsasUsageTotals</div><div class="c" style="left:533px;top:692px;width:343px;letter-spacing:-0.2px;padding-left:3.5px;">PK_PerformanceAnalysisSsasAttributeUsageTotals</div><div class="c" style="left:877px;top:692px;width:70px;letter-spacing:-0.2px;padding-left:3.5px;">clustered</div><svg width="14" height="14" style="position:absolute;left:982.5px;top:696px"><path d="M2 7 L5 10 L10 2.5" fill="none" stroke="#3a5f8f" stroke-width="2"/></svg><svg width="14" height="14" style="position:absolute;left:1051.5px;top:696px"><path d="M2 7 L5 10 L10 2.5" fill="none" stroke="#3a5f8f" stroke-width="2"/></svg><div class="c" style="left:1086px;top:692px;width:105px;letter-spacing:-0.2px;padding-left:3.5px;">FG</div><div class="c" style="left:1192px;top:692px;width:82px;letter-spacing:0px;text-align:right;padding-right:3.5px;">1,155.66</div><div class="c" style="left:1275px;top:692px;width:72px;letter-spacing:0px;text-align:right;padding-right:3.5px;">1,155.38</div><div class="c" style="left:1348px;top:692px;width:116px;letter-spacing:0px;text-align:right;padding-right:3.5px;">1.82</div><div class="c" style="left:1465px;top:692px;width:122px;letter-spacing:0px;text-align:right;padding-right:3.5px;">0.04</div><div class="c" style="left:1588px;top:692px;width:146px;letter-spacing:0px;text-align:right;padding-right:3.5px;">4,991,333</div><div class="c" style="left:1735px;top:692px;width:117px;letter-spacing:0px;text-align:right;padding-right:3.5px;">0 %</div><div class="c" style="left:1996px;top:692px;width:69px;letter-spacing:0px;text-align:right;padding-right:3.5px;">0 %</div><div class="c" style="left:2226px;top:692px;width:111px;letter-spacing:0px;padding-left:3.5px;">2019-12-09 15:03:49</div><div class="c" style="left:2338px;top:692px;width:74px;letter-spacing:0px;padding-left:3.5px;">00:00:00.017</div><div class="c" style="left:2413px;top:692px;width:140px;letter-spacing:0px;padding-left:3.5px;">Defrag skipped, fragmentation level below threshold</div><div class="b" style="left:7px;top:714px;width:2525px;height:1px;background:#d9d9d9"></div><div class="c" style="left:7px;top:715px;width:121px;letter-spacing:-0.45px;padding-left:2.5px;">LONDONSQL01.se.local</div><div class="c" style="left:129px;top:715px;width:137px;letter-spacing:-0.2px;padding-left:3.5px;">AdventureWorks2014</div><div class="c" style="left:267px;top:715px;width:265px;letter-spacing:-0.2px;padding-left:3.5px;">Production.TransactionHistory</div><div class="c" style="left:533px;top:715px;width:343px;letter-spacing:-0.2px;padding-left:3.5px;">PK_TransactionHistory_TransactionID</div><div class="c" style="left:877px;top:715px;width:70px;letter-spacing:-0.2px;padding-left:3.5px;">clustered</div><svg width="14" height="14" style="position:absolute;left:982.5px;top:719px"><path d="M2 7 L5 10 L10 2.5" fill="none" stroke="#3a5f8f" stroke-width="2"/></svg><svg width="14" height="14" style="position:absolute;left:1051.5px;top:719px"><path d="M2 7 L5 10 L10 2.5" fill="none" stroke="#3a5f8f" stroke-width="2"/></svg><div class="c" style="left:1086px;top:715px;width:105px;letter-spacing:-0.2px;padding-left:3.5px;">FG</div><div class="c" style="left:1192px;top:715px;width:82px;letter-spacing:0px;text-align:right;padding-right:3.5px;">1,136.02</div><div class="c" style="left:1275px;top:715px;width:72px;letter-spacing:0px;text-align:right;padding-right:3.5px;">1,135.77</div><div class="c" style="left:1348px;top:715px;width:116px;letter-spacing:0px;text-align:right;padding-right:3.5px;">896.01</div><div class="c" style="left:1465px;top:715px;width:122px;letter-spacing:0px;text-align:right;padding-right:3.5px;">5.97</div><div class="c" style="left:1588px;top:715px;width:146px;letter-spacing:0px;text-align:right;padding-right:3.5px;">20,803,760</div><div class="c" style="left:1735px;top:715px;width:117px;letter-spacing:0px;text-align:right;padding-right:3.5px;">2 %</div><div class="c" style="left:1996px;top:715px;width:69px;letter-spacing:0px;text-align:right;padding-right:3.5px;">0 %</div><div class="c" style="left:2066px;top:715px;width:104px;letter-spacing:0px;text-align:right;padding-right:3.5px;">1</div><div class="c" style="left:2226px;top:715px;width:111px;letter-spacing:0px;padding-left:3.5px;">2019-12-09 15:03:03</div><div class="c" style="left:2338px;top:715px;width:74px;letter-spacing:0px;padding-left:3.5px;">00:00:00.016</div><div class="c" style="left:2413px;top:715px;width:140px;letter-spacing:0px;padding-left:3.5px;">Defrag skipped, fragmentation level below threshold</div><div class="b" style="left:7px;top:737px;width:2525px;height:1px;background:#d9d9d9"></div><div class="c" style="left:7px;top:738px;width:121px;letter-spacing:-0.45px;padding-left:2.5px;">LONDONSQL01.se.local</div><div class="c" style="left:129px;top:738px;width:137px;letter-spacing:-0.2px;padding-left:3.5px;">SQLSentry_co</div><div class="c" style="left:267px;top:738px;width:265px;letter-spacing:-0.2px;padding-left:3.5px;">dbo.PerformanceAnalysisSsasUsageTotals</div><div class="c" style="left:533px;top:738px;width:343px;letter-spacing:-0.2px;padding-left:3.5px;">IX_PerformanceAnalysisSsasUsageTotals_DBCubeMGVectorHashType</div><div class="c" style="left:877px;top:738px;width:70px;letter-spacing:-0.2px;padding-left:3.5px;">nonclustered</div><div class="c" style="left:1086px;top:738px;width:105px;letter-spacing:-0.2px;padding-left:3.5px;">FG</div><div class="c" style="left:1192px;top:738px;width:82px;letter-spacing:0px;text-align:right;padding-right:3.5px;">859.04</div><div class="c" style="left:1275px;top:738px;width:72px;letter-spacing:0px;text-align:right;padding-right:3.5px;">855.34</div><div class="c" style="left:1348px;top:738px;width:116px;letter-spacing:0px;text-align:right;padding-right:3.5px;">9.76</div><div class="c" style="left:1465px;top:738px;width:122px;letter-spacing:0px;text-align:right;padding-right:3.5px;">1.57</div><div class="c" style="left:1588px;top:738px;width:146px;letter-spacing:0px;text-align:right;padding-right:3.5px;">4,991,333</div><div class="c" style="left:1735px;top:738px;width:117px;letter-spacing:0px;text-align:right;padding-right:3.5px;">0 %</div><div class="c" style="left:1996px;top:738px;width:69px;letter-spacing:0px;text-align:right;padding-right:3.5px;">0 %</div><div class="c" style="left:2226px;top:738px;width:111px;letter-spacing:0px;padding-left:3.5px;">2019-12-09 15:03:41</div><div class="c" style="left:2338px;top:738px;width:74px;letter-spacing:0px;padding-left:3.5px;">00:00:00.000</div><div class="c" style="left:2413px;top:738px;width:140px;letter-spacing:0px;padding-left:3.5px;">Defrag skipped, fragmentation level below threshold</div><div class="b" style="left:7px;top:760px;width:2525px;height:1px;background:#d9d9d9"></div><div class="c" style="left:7px;top:761px;width:121px;letter-spacing:-0.45px;padding-left:2.5px;">LONDONSQL01.se.local</div><div class="c" style="left:129px;top:761px;width:137px;letter-spacing:-0.2px;padding-left:3.5px;">IndexOrig</div><div class="c" style="left:267px;top:761px;width:265px;letter-spacing:-0.2px;padding-left:3.5px;">dbo.PerformanceAnalysisSsasTraceDataDetail</div><div class="c" style="left:533px;top:761px;width:343px;letter-spacing:-0.2px;padding-left:3.5px;">heap data</div><div class="c" style="left:877px;top:761px;width:70px;letter-spacing:-0.2px;padding-left:3.5px;">heap</div><div class="c" style="left:1086px;top:761px;width:105px;letter-spacing:-0.2px;padding-left:3.5px;">FG</div><div class="c" style="left:1192px;top:761px;width:82px;letter-spacing:0px;text-align:right;padding-right:3.5px;">788.82</div><div class="c" style="left:1275px;top:761px;width:72px;letter-spacing:0px;text-align:right;padding-right:3.5px;">717.48</div><div class="c" style="left:1348px;top:761px;width:116px;letter-spacing:0px;text-align:right;padding-right:3.5px;">0.01</div><div class="c" style="left:1465px;top:761px;width:122px;letter-spacing:0px;text-align:right;padding-right:3.5px;">0.00</div><div class="c" style="left:1588px;top:761px;width:146px;letter-spacing:0px;text-align:right;padding-right:3.5px;">3,223,410</div><div class="c" style="left:1996px;top:761px;width:69px;letter-spacing:0px;text-align:right;padding-right:3.5px;">0 %</div><div class="c" style="left:2066px;top:761px;width:104px;letter-spacing:0px;text-align:right;padding-right:3.5px;">0</div><div class="b" style="left:7px;top:783px;width:2525px;height:1px;background:#d9d9d9"></div><div class="c" style="left:7px;top:784px;width:121px;letter-spacing:-0.45px;padding-left:2.5px;">LONDONSQL01.se.local</div><div class="c" style="left:129px;top:784px;width:137px;letter-spacing:-0.2px;padding-left:3.5px;">SQLSentry_co</div><div class="c" style="left:267px;top:784px;width:265px;letter-spacing:-0.2px;padding-left:3.5px;">dbo.PerformanceAnalysisDataRollup4</div><div class="c" style="left:533px;top:784px;width:343px;letter-spacing:-0.2px;padding-left:3.5px;">IX_PerformanceAnalysisDataRollup4</div><div class="c" style="left:877px;top:784px;width:70px;letter-spacing:-0.2px;padding-left:3.5px;">clustered</div><div class="c" style="left:1086px;top:784px;width:105px;letter-spacing:-0.2px;padding-left:3.5px;">FG</div><div class="c" style="left:1192px;top:784px;width:82px;letter-spacing:0px;text-align:right;padding-right:3.5px;">787.61</div><div class="c" style="left:1275px;top:784px;width:72px;letter-spacing:0px;text-align:right;padding-right:3.5px;">787.03</div><div class="c" style="left:1348px;top:784px;width:116px;letter-spacing:0px;text-align:right;padding-right:3.5px;">0.15</div><div class="c" style="left:1465px;top:784px;width:122px;letter-spacing:0px;text-align:right;padding-right:3.5px;">0.04</div><div class="c" style="left:1588px;top:784px;width:146px;letter-spacing:0px;text-align:right;padding-right:3.5px;">2,758,008</div><div class="c" style="left:1735px;top:784px;width:117px;letter-spacing:0px;text-align:right;padding-right:3.5px;">0 %</div><div class="c" style="left:1996px;top:784px;width:69px;letter-spacing:0px;text-align:right;padding-right:3.5px;">0 %</div><div class="c" style="left:2066px;top:784px;width:104px;letter-spacing:0px;text-align:right;padding-right:3.5px;">1</div><div class="c" style="left:2226px;top:784px;width:111px;letter-spacing:0px;padding-left:3.5px;">2019-12-09 15:03:53</div><div class="c" style="left:2338px;top:784px;width:74px;letter-spacing:0px;padding-left:3.5px;">00:00:00.000</div><div class="c" style="left:2413px;top:784px;width:140px;letter-spacing:0px;padding-left:3.5px;">Defrag skipped, fragmentation level below threshold</div><div class="b" style="left:7px;top:806px;width:2525px;height:1px;background:#d9d9d9"></div><div class="b" style="left:128px;top:485px;width:1px;height:307px;background:#d9d9d9"></div><div class="b" style="left:266px;top:485px;width:1px;height:307px;background:#d9d9d9"></div><div class="b" style="left:532px;top:485px;width:1px;height:307px;background:#d9d9d9"></div><div class="b" style="left:876px;top:485px;width:1px;height:307px;background:#d9d9d9"></div><div class="b" style="left:947px;top:485px;width:1px;height:307px;background:#d9d9d9"></div><div class="b" style="left:1028px;top:485px;width:1px;height:307px;background:#d9d9d9"></div><div class="b" style="left:1085px;top:485px;width:1px;height:307px;background:#d9d9d9"></div><div class="b" style="left:1191px;top:485px;width:1px;height:307px;background:#d9d9d9"></div><div class="b" style="left:1274px;top:485px;width:1px;height:307px;background:#d9d9d9"></div><div class="b" style="left:1347px;top:485px;width:1px;height:307px;background:#d9d9d9"></div><div class="b" style="left:1464px;top:485px;width:1px;height:307px;background:#d9d9d9"></div><div class="b" style="left:1587px;top:485px;width:1px;height:307px;background:#d9d9d9"></div><div class="b" style="left:1734px;top:485px;width:1px;height:307px;background:#d9d9d9"></div><div class="b" style="left:1852px;top:485px;width:1px;height:307px;background:#d9d9d9"></div><div class="b" style="left:1995px;top:485px;width:1px;height:307px;background:#d9d9d9"></div><div class="b" style="left:2065px;top:485px;width:1px;height:307px;background:#d9d9d9"></div><div class="b" style="left:2170px;top:485px;width:1px;height:307px;background:#d9d9d9"></div><div class="b" style="left:2225px;top:485px;width:1px;height:307px;background:#d9d9d9"></div><div class="b" style="left:2337px;top:485px;width:1px;height:307px;background:#d9d9d9"></div><div class="b" style="left:2412px;top:485px;width:1px;height:307px;background:#d9d9d9"></div></div><div class="b" style="left:2532px;top:485px;width:21px;height:307px;background:#e8e8e8;"></div><div class="b" style="left:2532px;top:506px;width:21px;height:34px;background:#c8c8c8;"></div><div class="b" style="left:7px;top:792px;width:2525px;height:21px;background:#e8e8e8;"></div><div class="b" style="left:28px;top:792px;width:2073px;height:21px;background:#c8c8c8;"></div><div class="b" style="left:2532px;top:792px;width:21px;height:21px;background:#f0f0f0;"></div><svg width="2560" height="900" style="left:0;top:0"><path d="M2539 497.5 L2542.5 493.8 L2546 497.5" fill="none" stroke="#707070" stroke-width="2"/><path d="M2539 779.5 L2542.5 783.2 L2546 779.5" fill="none" stroke="#707070" stroke-width="2"/><path d="M20 798.5 L16 802.5 L20 806.5" fill="none" stroke="#606060" stroke-width="2"/><path d="M2520 798.5 L2524 802.5 L2520 806.5" fill="none" stroke="#606060" stroke-width="2"/></svg><div class="b" style="left:7px;top:813px;width:2546px;height:46px;background:#f0f0f0;"></div><div class="b" style="left:7px;top:813px;width:2546px;height:1px;background:#a9a9a9;"></div><div class="b" style="left:12px;top:835px;width:21px;height:21px;background:#f0f0f0;border:1px solid #a0a0a0;"></div><svg width="60" height="870" style="left:0;top:0"><path d="M18.5 842.5 L26.5 849 M26.5 842.5 L18.5 849" stroke="#606060" stroke-width="2"/><rect x="37.5" y="839.5" width="12" height="12" fill="#fff" stroke="#8a8a8a"/><path d="M39.5 845.5 L42.5 849.5 L48 842" fill="none" stroke="#5a5a5a" stroke-width="1.5"/></svg><div class="t" style="left:54px;top:839.7px;font-size:11px;color:#1e1e1e;">[Used (MB)] &gt; '10.00'</div><div class="b" style="left:2498px;top:835px;width:51px;height:21px;background:#f0f0f0;border:1px solid #a0a0a0;"></div><div class="t" style="left:2500px;top:840.2px;font-size:11px;color:#6d6d6d;">Edit Filter</div><div class="t" style="left:10px;top:910.7px;font-size:11px;color:#1e1e1e;">Index Fragmentation</div><div class="b" style="left:10px;top:925px;width:847px;height:256px;background:#fff;border:1px solid #a0a0a0;"></div><div class="t" style="left:861px;top:910.7px;font-size:11px;color:#1e1e1e;">Index Space Usage (MB)</div><div class="b" style="left:861px;top:925px;width:847px;height:256px;background:#fff;border:1px solid #a0a0a0;"></div><div class="b" style="left:1062px;top:1146px;width:445px;height:24px;background:#fff;border:1px solid #a0a0a0;"></div><div class="t" style="left:1712px;top:910.7px;font-size:11px;color:#1e1e1e;">Index Activity</div><div class="b" style="left:1712px;top:925px;width:838px;height:256px;background:#fff;border:1px solid #a0a0a0;"></div><div class="b" style="left:1895px;top:1146px;width:472px;height:24px;background:#fff;border:1px solid #a0a0a0;"></div><div class="b" style="left:0px;top:1190px;width:2560px;height:25px;background:#f0f0f0;"></div><div class="b" style="left:1px;top:1188px;width:2558px;height:1px;background:#c4c4c4;"></div><div class="b" style="left:1px;top:1189px;width:2558px;height:1px;background:#b0b0b0;"></div><div class="b" style="left:1px;top:1192px;width:330px;height:22px;border:1px solid #5a5a5a;"></div><div class="b" style="left:334px;top:1193px;width:126px;height:20px;border:1px solid #6f96d0;border-radius:2px;background:linear-gradient(#c9cdd9,#dfe2eb);"></div><div class="b" style="left:463px;top:1192px;width:1671px;height:22px;border:1px solid #5a5a5a;"></div><div class="b" style="left:2136px;top:1192px;width:180px;height:22px;border:1px solid #5a5a5a;"></div><div class="b" style="left:2318px;top:1192px;width:220px;height:22px;border:1px solid #5a5a5a;"></div><div class="t" style="left:6px;top:1196.3px;font-size:15px;color:#0c3c9c;">Ready</div><div class="t" style="left:468px;top:1196.3px;font-size:15px;color:#0c3c9c;letter-spacing:-0.35px;">LONDONSQL01.SE.LOCAL\Performance Analysis\Indexes</div><div class="t" style="left:2142px;top:1196.3px;font-size:15px;color:#0c3c9c;">Your software is up to d...</div><svg width="2560" height="1215" style="left:0;top:0"><circle cx="2549" cy="1202.5" r="6.5" fill="#ff0000" stroke="#b00000" stroke-width="0.6"/></svg><svg width="2560" height="1215" style="left:0;top:0;font-family:'Liberation Sans',sans-serif"><path d="M45 135.5 H845" stroke="#dcdcdc" stroke-width="1"/><path d="M45 174.5 H845" stroke="#dcdcdc" stroke-width="1"/><path d="M45 214.5 H845" stroke="#dcdcdc" stroke-width="1"/><path d="M45 253.5 H845" stroke="#dcdcdc" stroke-width="1"/><path d="M45 292.5 H845" stroke="#dcdcdc" stroke-width="1"/><rect x="97.5" y="135.5" width="161" height="79" fill="#ff8888" stroke="#e04848" /><rect x="97.5" y="214.5" width="161" height="78" fill="#ffff88" stroke="#d8d040" /><rect x="97.5" y="292.5" width="161" height="37" fill="#88d08a" stroke="#3aa04a" /><path d="M98 174.5 H258" stroke="#000" stroke-opacity="0.08" stroke-width="1"/><path d="M98 253.5 H258" stroke="#000" stroke-opacity="0.08" stroke-width="1"/><rect x="364.5" y="135.5" width="161" height="79" fill="#ff8888" stroke="#e04848" /><rect x="364.5" y="214.5" width="161" height="78" fill="#ffff88" stroke="#d8d040" /><rect x="364.5" y="292.5" width="161" height="37" fill="#88d08a" stroke="#3aa04a" /><path d="M365 174.5 H525" stroke="#000" stroke-opacity="0.08" stroke-width="1"/><path d="M365 253.5 H525" stroke="#000" stroke-opacity="0.08" stroke-width="1"/><rect x="631.5" y="135.5" width="161" height="79" fill="#ff8888" stroke="#e04848" /><rect x="631.5" y="214.5" width="161" height="78" fill="#ffff88" stroke="#d8d040" /><rect x="631.5" y="292.5" width="161" height="37" fill="#88d08a" stroke="#3aa04a" /><path d="M632 174.5 H792" stroke="#000" stroke-opacity="0.08" stroke-width="1"/><path d="M632 253.5 H792" stroke="#000" stroke-opacity="0.08" stroke-width="1"/><path d="M44.3 308.3 L50.2 307.3 L60.3 306.3 L67.0 307.3 L72.0 308.3 L77.1 309.3 L82.2 310.3 L99.4 309.3 L120.5 310.3 L126.0 309.3 L133.8 306.5 L137.7 307.3 L143.9 309.3 L154.0 306.5 L164.2 310.3 L172.8 307.7 L182.2 306.5 L193.1 309.3 L210.3 307.7 L229.8 307.7 L240.0 308.5 L245.0 307.7 L251.0 308.3 L271.0 306.5 L276.0 309.3 L281.0 307.7 L294.0 306.5 L307.0 307.3 L312.0 306.5 L322.0 308.3 L327.0 307.3 L332.0 309.3 L342.0 306.5 L355.0 306.5 L361.0 310.3 L381.0 309.3 L386.0 309.3 L399.0 308.3 L404.0 307.3 L409.0 309.3 L415.0 307.7 L425.0 307.3 L438.0 306.5 L451.0 307.7 L464.0 310.3 L470.0 306.5 L483.0 309.3 L503.0 307.3 L511.0 306.5 L524.0 310.3 L529.0 309.3 L534.0 309.3 L540.0 308.3 L560.0 309.3 L570.0 307.7 L580.0 309.3 L590.0 307.7 L598.0 307.3 L604.0 310.3 L610.0 306.5 L623.0 307.7 L636.0 308.3 L644.0 310.3 L654.0 307.7 L667.0 306.5 L672.0 309.3 L682.0 307.3 L690.0 307.3 L700.0 308.3 L705.0 310.3 L710.0 309.3 L723.0 307.7 L731.0 310.3 L739.0 309.3 L749.0 309.3 L759.0 306.5 L764.0 307.7 L774.0 310.3 L794.0 306.5 L799.0 310.3 L819.0 307.7 L839.0 309.3 L845.0 308.3 L845.0 313.3 L839.0 314.3 L819.0 312.7 L799.0 315.3 L794.0 311.5 L774.0 315.3 L764.0 312.7 L759.0 311.5 L749.0 314.3 L739.0 314.3 L731.0 315.3 L723.0 312.7 L710.0 314.3 L705.0 315.3 L700.0 313.3 L690.0 312.3 L682.0 312.3 L672.0 314.3 L667.0 311.5 L654.0 312.7 L644.0 315.3 L636.0 313.3 L623.0 312.7 L610.0 311.5 L604.0 315.3 L598.0 312.3 L590.0 312.7 L580.0 314.3 L570.0 312.7 L560.0 314.3 L540.0 313.3 L534.0 314.3 L529.0 314.3 L524.0 315.3 L511.0 311.5 L503.0 312.3 L483.0 314.3 L470.0 311.5 L464.0 315.3 L451.0 312.7 L438.0 311.5 L425.0 312.3 L415.0 312.7 L409.0 314.3 L404.0 312.3 L399.0 313.3 L386.0 314.3 L381.0 314.3 L361.0 315.3 L355.0 311.5 L342.0 311.5 L332.0 314.3 L327.0 312.3 L322.0 313.3 L312.0 311.5 L307.0 312.3 L294.0 311.5 L281.0 312.7 L276.0 314.3 L271.0 311.5 L251.0 313.3 L245.0 312.7 L240.0 313.5 L229.8 312.7 L210.3 312.7 L193.1 314.3 L182.2 311.5 L172.8 312.7 L164.2 315.3 L154.0 311.5 L143.9 314.3 L137.7 312.3 L133.8 311.5 L126.0 314.3 L120.5 315.3 L99.4 314.3 L82.2 315.3 L77.1 314.3 L72.0 313.3 L67.0 312.3 L60.3 311.3 L50.2 312.3 L44.3 313.3 Z" fill="#fff"/><path d="M44.3 308.3 L50.2 307.3 L60.3 306.3 L67.0 307.3 L72.0 308.3 L77.1 309.3 L82.2 310.3 L99.4 309.3 L120.5 310.3 L126.0 309.3 L133.8 306.5 L137.7 307.3 L143.9 309.3 L154.0 306.5 L164.2 310.3 L172.8 307.7 L182.2 306.5 L193.1 309.3 L210.3 307.7 L229.8 307.7 L240.0 308.5 L245.0 307.7 L251.0 308.3 L271.0 306.5 L276.0 309.3 L281.0 307.7 L294.0 306.5 L307.0 307.3 L312.0 306.5 L322.0 308.3 L327.0 307.3 L332.0 309.3 L342.0 306.5 L355.0 306.5 L361.0 310.3 L381.0 309.3 L386.0 309.3 L399.0 308.3 L404.0 307.3 L409.0 309.3 L415.0 307.7 L425.0 307.3 L438.0 306.5 L451.0 307.7 L464.0 310.3 L470.0 306.5 L483.0 309.3 L503.0 307.3 L511.0 306.5 L524.0 310.3 L529.0 309.3 L534.0 309.3 L540.0 308.3 L560.0 309.3 L570.0 307.7 L580.0 309.3 L590.0 307.7 L598.0 307.3 L604.0 310.3 L610.0 306.5 L623.0 307.7 L636.0 308.3 L644.0 310.3 L654.0 307.7 L667.0 306.5 L672.0 309.3 L682.0 307.3 L690.0 307.3 L700.0 308.3 L705.0 310.3 L710.0 309.3 L723.0 307.7 L731.0 310.3 L739.0 309.3 L749.0 309.3 L759.0 306.5 L764.0 307.7 L774.0 310.3 L794.0 306.5 L799.0 310.3 L819.0 307.7 L839.0 309.3 L845.0 308.3" fill="none" stroke="#a8a8a8" stroke-width="1" shape-rendering="crispEdges"/><path d="M44.3 313.3 L50.2 312.3 L60.3 311.3 L67.0 312.3 L72.0 313.3 L77.1 314.3 L82.2 315.3 L99.4 314.3 L120.5 315.3 L126.0 314.3 L133.8 311.5 L137.7 312.3 L143.9 314.3 L154.0 311.5 L164.2 315.3 L172.8 312.7 L182.2 311.5 L193.1 314.3 L210.3 312.7 L229.8 312.7 L240.0 313.5 L245.0 312.7 L251.0 313.3 L271.0 311.5 L276.0 314.3 L281.0 312.7 L294.0 311.5 L307.0 312.3 L312.0 311.5 L322.0 313.3 L327.0 312.3 L332.0 314.3 L342.0 311.5 L355.0 311.5 L361.0 315.3 L381.0 314.3 L386.0 314.3 L399.0 313.3 L404.0 312.3 L409.0 314.3 L415.0 312.7 L425.0 312.3 L438.0 311.5 L451.0 312.7 L464.0 315.3 L470.0 311.5 L483.0 314.3 L503.0 312.3 L511.0 311.5 L524.0 315.3 L529.0 314.3 L534.0 314.3 L540.0 313.3 L560.0 314.3 L570.0 312.7 L580.0 314.3 L590.0 312.7 L598.0 312.3 L604.0 315.3 L610.0 311.5 L623.0 312.7 L636.0 313.3 L644.0 315.3 L654.0 312.7 L667.0 311.5 L672.0 314.3 L682.0 312.3 L690.0 312.3 L700.0 313.3 L705.0 315.3 L710.0 314.3 L723.0 312.7 L731.0 315.3 L739.0 314.3 L749.0 314.3 L759.0 311.5 L764.0 312.7 L774.0 315.3 L794.0 311.5 L799.0 315.3 L819.0 312.7 L839.0 314.3 L845.0 313.3" fill="none" stroke="#a8a8a8" stroke-width="1" shape-rendering="crispEdges"/><path d="M44.5 308.5 V116.5 H845.5 V308.5" fill="none" stroke="#a0a0a0"/><path d="M44.5 313.5 V329.5 H845.5 V313.5" fill="none" stroke="#a0a0a0"/><path d="M39 135.5 H44" stroke="#9a9a9a" stroke-width="1"/><path d="M39 174.5 H44" stroke="#9a9a9a" stroke-width="1"/><path d="M39 214.5 H44" stroke="#9a9a9a" stroke-width="1"/><path d="M39 253.5 H44" stroke="#9a9a9a" stroke-width="1"/><path d="M39 292.5 H44" stroke="#9a9a9a" stroke-width="1"/><path d="M39 329.5 H44" stroke="#9a9a9a" stroke-width="1"/><path d="M42 148.5 H44" stroke="#9a9a9a" stroke-width="1"/><path d="M42 161.5 H44" stroke="#9a9a9a" stroke-width="1"/><path d="M42 187.5 H44" stroke="#9a9a9a" stroke-width="1"/><path d="M42 201.5 H44" stroke="#9a9a9a" stroke-width="1"/><path d="M42 227.5 H44" stroke="#9a9a9a" stroke-width="1"/><path d="M42 240.5 H44" stroke="#9a9a9a" stroke-width="1"/><path d="M42 266.5 H44" stroke="#9a9a9a" stroke-width="1"/><path d="M42 279.5 H44" stroke="#9a9a9a" stroke-width="1"/><path d="M42 122.5 H44" stroke="#9a9a9a" stroke-width="1"/><path d="M42 305.5 H44" stroke="#9a9a9a" stroke-width="1"/><path d="M42 316.5 H44" stroke="#9a9a9a" stroke-width="1"/><text x="33" y="138.8" font-size="12.7" text-anchor="end" fill="#333">92</text><text x="33" y="177.8" font-size="12.7" text-anchor="end" fill="#333">92</text><text x="33" y="217.8" font-size="12.7" text-anchor="end" fill="#333">91</text><text x="33" y="256.8" font-size="12.7" text-anchor="end" fill="#333">91</text><text x="33" y="295.8" font-size="12.7" text-anchor="end" fill="#333">90</text><text x="33" y="332.8" font-size="12.7" text-anchor="end" fill="#333">0</text><path d="M178.5 330 V335" stroke="#9a9a9a" stroke-width="1"/><text x="178.5" y="351" font-size="12.7" text-anchor="middle" fill="#333">12/8/2019</text><path d="M444.5 330 V335" stroke="#9a9a9a" stroke-width="1"/><text x="444.5" y="351" font-size="12.7" text-anchor="middle" fill="#333">12/9/2019</text><path d="M712.5 330 V335" stroke="#9a9a9a" stroke-width="1"/><text x="712" y="351" font-size="12.7" text-anchor="middle" fill="#333">12/10/2019</text><rect x="311.5" y="368.5" width="8" height="8" fill="#88d08a" stroke="#3aa04a" /><text x="324.4" y="376.6" font-size="12.7" text-anchor="start" fill="#333">0-10%</text><rect x="371.5" y="368.5" width="8" height="8" fill="#ffff88" stroke="#c8c040" /><text x="384.6" y="376.6" font-size="12.7" text-anchor="start" fill="#333">10-20%</text><rect x="438.5" y="368.5" width="8" height="8" fill="#ffc080" stroke="#e09040" /><text x="451" y="376.6" font-size="12.7" text-anchor="start" fill="#333">20-30%</text><rect x="505.5" y="368.5" width="8" height="8" fill="#ff8888" stroke="#d04040" /><text x="518" y="376.6" font-size="12.7" text-anchor="start" fill="#333">&gt;30%</text><path d="M921 281.5 H1696" stroke="#dcdcdc" stroke-width="1"/><path d="M921 234.5 H1696" stroke="#dcdcdc" stroke-width="1"/><path d="M921 186.5 H1696" stroke="#dcdcdc" stroke-width="1"/><path d="M921 139.5 H1696" stroke="#dcdcdc" stroke-width="1"/><path d="M921.0 329 L921.0 136.8 L1010.0 136.2 L1050.0 136.5 L1090.0 137.2 L1200.0 137.0 L1300.0 136.8 L1380.0 136.5 L1460.0 137.2 L1560.0 136.8 L1630.0 136.6 L1634.0 138.5 L1638.0 136.6 L1693.5 136.6 L1693.5 329 Z" fill="#f2c9a0"/><path d="M921 329 L921.0 136.8 L1010.0 136.2 L1050.0 136.5 L1090.0 137.2 L1200.0 137.0 L1300.0 136.8 L1380.0 136.5 L1460.0 137.2 L1560.0 136.8 L1630.0 136.6 L1634.0 138.5 L1638.0 136.6 L1693.0 136.8 L1693 328 L921 328 Z" fill="#c55f05"/><path d="M920.5 329.5 V116.5 H1696.5 V329.5 Z" fill="none" stroke="#a0a0a0"/><path d="M915 329.5 H920" stroke="#9a9a9a" stroke-width="1"/><path d="M915 281.5 H920" stroke="#9a9a9a" stroke-width="1"/><path d="M915 234.5 H920" stroke="#9a9a9a" stroke-width="1"/><path d="M915 186.5 H920" stroke="#9a9a9a" stroke-width="1"/><path d="M915 139.5 H920" stroke="#9a9a9a" stroke-width="1"/><path d="M918 313.5 H920" stroke="#9a9a9a" stroke-width="1"/><path d="M918 297.5 H920" stroke="#9a9a9a" stroke-width="1"/><path d="M918 266.5 H920" stroke="#9a9a9a" stroke-width="1"/><path d="M918 250.5 H920" stroke="#9a9a9a" stroke-width="1"/><path d="M918 218.5 H920" stroke="#9a9a9a" stroke-width="1"/><path d="M918 202.5 H920" stroke="#9a9a9a" stroke-width="1"/><path d="M918 170.5 H920" stroke="#9a9a9a" stroke-width="1"/><path d="M918 154.5 H920" stroke="#9a9a9a" stroke-width="1"/><path d="M918 123.5 H920" stroke="#9a9a9a" stroke-width="1"/><text x="909" y="142.4" font-size="12.7" text-anchor="end" fill="#333">40,000</text><text x="909" y="190.0" font-size="12.7" text-anchor="end" fill="#333">30,000</text><text x="909" y="237.60000000000002" font-size="12.7" text-anchor="end" fill="#333">20,000</text><text x="909" y="285.2" font-size="12.7" text-anchor="end" fill="#333">10,000</text><text x="909" y="332.8" font-size="12.7" text-anchor="end" fill="#333">0</text><path d="M1082.5 330 V335" stroke="#9a9a9a" stroke-width="1"/><text x="1082.5" y="351" font-size="12.7" text-anchor="middle" fill="#333">7:00:00 PM</text><path d="M1474.5 330 V335" stroke="#9a9a9a" stroke-width="1"/><text x="1473.5" y="351" font-size="12.7" text-anchor="middle" fill="#333">7:00:00 PM</text><path d="M1201.5 377.5 L1207.0 367.5 L1212.5 377.5 Z" fill="#f0c8a0"/><text x="1215.5" y="376.6" font-size="12.7" text-anchor="start" fill="#333">Unused</text><path d="M1265 377.5 L1270.5 367.5 L1276 377.5 Z" fill="#c55f05"/><text x="1279" y="376.6" font-size="12.7" text-anchor="start" fill="#333">Used</text><path d="M1315.5 377.5 L1321.0 367.5 L1326.5 377.5 Z" fill="#f5e3d2"/><text x="1329" y="376.6" font-size="12.7" text-anchor="start" fill="#333">Empty</text><path d="M1765 299.5 H2538" stroke="#dcdcdc" stroke-width="1"/><path d="M1765 268.5 H2538" stroke="#dcdcdc" stroke-width="1"/><path d="M1765 238.5 H2538" stroke="#dcdcdc" stroke-width="1"/><path d="M1765 207.5 H2538" stroke="#dcdcdc" stroke-width="1"/><path d="M1765 177.5 H2538" stroke="#dcdcdc" stroke-width="1"/><path d="M1765 146.5 H2538" stroke="#dcdcdc" stroke-width="1"/><path d="M1764.8 329 L1764.8 157.2 L1767.8 160.1 L1772.1 160.1 L1776.4 161.0 L1779.9 162.0 L1784.2 161.1 L1788.5 160.8 L1792.0 159.4 L1796.3 162.9 L1800.6 161.8 L1804.1 161.0 L1808.4 153.4 L1812.7 157.2 L1817.9 157.7 L1821.4 158.7 L1824.8 160.3 L1829.1 159.2 L1832.9 271.3 L1836.9 270.0 L1841.2 145.4 L1853.3 145.4 L1856.8 148.5 L1861.1 149.0 L1865.4 157.2 L1872.4 158.4 L1881.0 161.5 L1886.2 162.9 L1889.6 148.0 L1896.6 152.0 L1901.7 154.2 L1906.1 151.6 L1910.4 152.8 L1918.2 155.4 L1922.5 147.3 L1926.8 157.2 L1930.3 277.3 L1934.6 272.1 L1938.0 144.5 L1941.5 145.9 L1946.7 146.3 L1951.9 148.0 L1958.8 149.0 L1970.9 149.4 L1976.1 152.5 L1979.5 158.0 L1983.0 157.2 L1987.3 150.8 L1991.6 154.2 L1999.4 156.6 L2003.7 135.9 L2007.2 142.1 L2014.1 142.1 L2010.0 142.5 L2015.2 142.5 L2020.4 144.2 L2023.8 146.3 L2028.2 277.3 L2031.6 273.0 L2035.9 148.5 L2047.2 148.5 L2051.5 151.1 L2056.3 152.2 L2060.1 196.1 L2065.0 195.2 L2068.8 168.1 L2074.0 167.5 L2079.1 168.1 L2085.2 165.5 L2091.2 166.3 L2096.4 165.8 L2101.6 167.0 L2106.8 167.0 L2112.9 165.3 L2117.2 170.1 L2121.5 170.5 L2125.5 321.4 L2137.6 167.0 L2144.8 166.3 L2149.2 161.0 L2153.5 167.0 L2162.1 165.3 L2166.4 157.2 L2170.8 161.0 L2177.7 161.5 L2182.0 159.8 L2186.3 164.9 L2194.1 166.7 L2198.4 170.1 L2205.3 168.7 L2210.5 168.4 L2219.2 169.3 L2222.6 279.0 L2226.9 272.1 L2230.9 145.4 L2239.9 149.4 L2243.4 149.0 L2248.5 145.4 L2252.0 145.9 L2255.5 153.2 L2263.2 152.0 L2270.0 155.4 L2274.3 155.4 L2279.5 151.5 L2283.8 151.5 L2291.6 155.1 L2295.9 137.6 L2300.3 142.1 L2307.2 145.1 L2314.9 144.5 L2323.6 144.5 L2327.9 147.3 L2347.8 146.8 L2356.4 149.4 L2360.8 145.6 L2365.9 150.3 L2373.7 152.0 L2377.2 150.3 L2385.8 156.3 L2389.3 155.4 L2393.6 146.3 L2406.6 146.3 L2410.0 149.4 L2417.8 149.4 L2421.6 274.7 L2425.6 143.3 L2436.8 148.5 L2441.1 146.3 L2446.3 146.8 L2450.1 209.9 L2454.1 205.6 L2458.4 165.3 L2461.9 170.1 L2466.2 170.1 L2470.5 175.3 L2474.8 164.1 L2480.9 162.4 L2486.1 163.2 L2491.3 167.0 L2499.9 166.3 L2506.0 168.1 L2511.7 165.8 L2515.1 268.7 L2518.9 268.7 L2523.2 160.6 L2527.6 160.1 L2535.3 164.1 L2535.3 329 Z" fill="#c3b9f3" stroke="#b0a6e6" stroke-width="0.6"/><path d="M1764.8 329 L1764.8 167.0 L1767.8 169.3 L1772.1 168.9 L1776.4 166.7 L1779.9 169.3 L1788.5 168.9 L1792.8 171.2 L1804.1 168.9 L1808.4 160.6 L1812.7 164.1 L1818.8 164.6 L1824.8 166.2 L1829.1 165.3 L1832.9 275.6 L1836.9 273.0 L1841.2 152.0 L1853.3 152.0 L1857.7 161.0 L1861.1 161.5 L1865.4 173.2 L1868.9 173.9 L1873.2 167.2 L1881.0 170.1 L1886.2 171.9 L1889.6 155.1 L1896.6 159.4 L1901.7 161.1 L1906.1 158.9 L1910.4 160.6 L1918.2 162.9 L1922.5 158.9 L1926.8 166.7 L1930.3 277.3 L1934.6 273.0 L1938.0 149.7 L1946.7 151.5 L1954.5 154.2 L1959.7 159.8 L1970.9 160.1 L1979.5 168.9 L1983.9 168.9 L1987.3 156.3 L1991.6 164.9 L1999.4 167.0 L2003.7 147.7 L2007.2 152.8 L2014.1 152.8 L2010.0 153.2 L2015.2 153.2 L2020.4 155.4 L2023.8 157.2 L2028.2 277.3 L2031.6 273.8 L2035.9 154.6 L2047.2 154.6 L2051.5 157.2 L2056.3 158.4 L2060.1 199.9 L2065.0 198.1 L2068.8 174.5 L2075.7 175.0 L2080.5 178.8 L2085.2 174.5 L2091.2 175.0 L2096.4 174.5 L2101.6 176.2 L2106.8 176.2 L2112.9 174.5 L2117.2 176.7 L2121.5 177.0 L2125.5 321.4 L2137.6 174.5 L2144.8 173.9 L2149.2 168.4 L2153.5 174.1 L2162.1 173.2 L2166.4 168.9 L2170.8 171.9 L2177.7 172.2 L2182.0 169.3 L2186.3 173.6 L2194.1 175.7 L2198.4 177.6 L2205.3 176.7 L2210.5 176.2 L2214.0 178.4 L2219.2 180.2 L2222.6 279.0 L2226.9 273.8 L2230.9 152.0 L2239.9 154.6 L2243.4 155.1 L2248.5 152.8 L2252.0 153.2 L2255.5 164.1 L2258.1 163.7 L2263.2 159.4 L2270.0 162.4 L2274.3 162.9 L2279.5 162.0 L2283.8 162.9 L2291.6 165.8 L2295.9 149.4 L2300.3 152.8 L2307.2 155.4 L2314.9 154.9 L2323.6 154.9 L2327.9 153.2 L2344.3 153.2 L2351.2 157.7 L2356.4 159.4 L2360.8 152.8 L2365.9 156.0 L2373.7 158.0 L2377.2 157.2 L2385.8 161.8 L2389.3 160.6 L2393.6 157.2 L2406.6 157.7 L2410.0 159.8 L2417.8 160.1 L2421.6 274.7 L2425.6 148.5 L2436.8 153.7 L2441.1 151.1 L2446.3 152.0 L2450.1 210.2 L2454.1 209.0 L2458.4 171.0 L2461.9 176.2 L2466.2 176.2 L2470.5 183.1 L2474.8 171.0 L2480.9 170.1 L2486.1 170.5 L2491.3 175.3 L2499.9 175.0 L2506.0 176.2 L2511.7 170.1 L2515.1 272.1 L2518.9 270.4 L2523.2 165.8 L2527.6 165.3 L2535.3 169.3 L2535.3 329 Z" fill="#7b68ea" stroke="#6f5ed8" stroke-width="0.6"/><path d="M1764.5 329.5 V116.5 H2538.5 V329.5 Z" fill="none" stroke="#a0a0a0"/><path d="M1759 329.5 H1764" stroke="#9a9a9a" stroke-width="1"/><path d="M1759 299.5 H1764" stroke="#9a9a9a" stroke-width="1"/><path d="M1759 268.5 H1764" stroke="#9a9a9a" stroke-width="1"/><path d="M1759 238.5 H1764" stroke="#9a9a9a" stroke-width="1"/><path d="M1759 207.5 H1764" stroke="#9a9a9a" stroke-width="1"/><path d="M1759 177.5 H1764" stroke="#9a9a9a" stroke-width="1"/><path d="M1759 146.5 H1764" stroke="#9a9a9a" stroke-width="1"/><path d="M1762 319.5 H1764" stroke="#9a9a9a" stroke-width="1"/><path d="M1762 309.5 H1764" stroke="#9a9a9a" stroke-width="1"/><path d="M1762 288.5 H1764" stroke="#9a9a9a" stroke-width="1"/><path d="M1762 278.5 H1764" stroke="#9a9a9a" stroke-width="1"/><path d="M1762 258.5 H1764" stroke="#9a9a9a" stroke-width="1"/><path d="M1762 248.5 H1764" stroke="#9a9a9a" stroke-width="1"/><path d="M1762 228.5 H1764" stroke="#9a9a9a" stroke-width="1"/><path d="M1762 217.5 H1764" stroke="#9a9a9a" stroke-width="1"/><path d="M1762 197.5 H1764" stroke="#9a9a9a" stroke-width="1"/><path d="M1762 187.5 H1764" stroke="#9a9a9a" stroke-width="1"/><path d="M1762 167.5 H1764" stroke="#9a9a9a" stroke-width="1"/><path d="M1762 157.5 H1764" stroke="#9a9a9a" stroke-width="1"/><path d="M1762 136.5 H1764" stroke="#9a9a9a" stroke-width="1"/><path d="M1762 126.5 H1764" stroke="#9a9a9a" stroke-width="1"/><text x="1753" y="150.22000000000003" font-size="12.7" text-anchor="end" fill="#333">3,000</text><text x="1753" y="180.65" font-size="12.7" text-anchor="end" fill="#333">2,500</text><text x="1753" y="211.08" font-size="12.7" text-anchor="end" fill="#333">2,000</text><text x="1753" y="241.51000000000002" font-size="12.7" text-anchor="end" fill="#333">1,500</text><text x="1753" y="271.94" font-size="12.7" text-anchor="end" fill="#333">1,000</text><text x="1753" y="302.37" font-size="12.7" text-anchor="end" fill="#333">500</text><text x="1753" y="332.8" font-size="12.7" text-anchor="end" fill="#333">0</text><path d="M1926.5 330 V335" stroke="#9a9a9a" stroke-width="1"/><text x="1926.4" y="351" font-size="12.7" text-anchor="middle" fill="#333">7:00:00 PM</text><path d="M2316.5 330 V335" stroke="#9a9a9a" stroke-width="1"/><text x="2316" y="351" font-size="12.7" text-anchor="middle" fill="#333">7:00:00 PM</text><path d="M2080 377.5 L2085.5 367.5 L2091 377.5 Z" fill="#7b68ea"/><text x="2093.5" y="376.6" font-size="12.7" text-anchor="start" fill="#333">Used</text><path d="M2130 377.5 L2135.5 367.5 L2141 377.5 Z" fill="#c3b9f3"/><text x="2143.5" y="376.6" font-size="12.7" text-anchor="start" fill="#333">Empty</text><path d="M2515.5 117 V329" stroke="#e020c8" stroke-width="1"/><circle cx="2515.5" cy="275.6" r="7.6" fill="#c8c0f5" fill-opacity="0.9"/><rect x="2359.5" y="339.5" width="155" height="50" rx="1.5" fill="#eff0f6" stroke="#606060" stroke-width="1"/><text x="2365" y="356" font-size="11" text-anchor="start" fill="#1e1e1e">Time: 12/10/2019 7:15:00 AM</text><text x="2365" y="369" font-size="11" text-anchor="start" fill="#1e1e1e">Name: Used</text><text x="2365" y="382" font-size="11" text-anchor="start" fill="#1e1e1e">Value: 838.05</text><rect x="58" y="940.0" width="787" height="52.0" fill="#ffcfcf" /><rect x="58" y="992.0" width="787" height="52.0" fill="#ffe4cc" /><rect x="58" y="1044.0" width="787" height="52.0" fill="#ffffcc" /><rect x="58" y="1096.0" width="787" height="52.0" fill="#cdeacd" /><path d="M58 1122.5 H845" stroke="#000" stroke-opacity="0.16" stroke-width="1"/><path d="M58 1070.5 H845" stroke="#000" stroke-opacity="0.16" stroke-width="1"/><path d="M58 1044.5 H845" stroke="#000" stroke-opacity="0.16" stroke-width="1"/><path d="M58 1018.5 H845" stroke="#000" stroke-opacity="0.16" stroke-width="1"/><path d="M58 966.5 H845" stroke="#000" stroke-opacity="0.16" stroke-width="1"/><path d="M58 992 H845" stroke="#ff0000" stroke-width="2" stroke-dasharray="6 2"/><path d="M58 1096 H845" stroke="#f5a000" stroke-width="2" stroke-dasharray="6 2"/><path d="M58 1101 H553.5" stroke="#4a88d0" stroke-width="2"/><text x="60.5" y="985.8" font-size="12.5" text-anchor="start" fill="#0a6cc8">Rebuild</text><text x="60.5" y="1089.8" font-size="12.5" text-anchor="start" fill="#0a6cc8">Reorganize</text><path d="M57.5 1148.5 V940.5 H845.5 V1148.5 Z" fill="none" stroke="#a0a0a0"/><path d="M52 1148.5 H57" stroke="#9a9a9a" stroke-width="1"/><path d="M52 1122.5 H57" stroke="#9a9a9a" stroke-width="1"/><path d="M52 1096.5 H57" stroke="#9a9a9a" stroke-width="1"/><path d="M52 1070.5 H57" stroke="#9a9a9a" stroke-width="1"/><path d="M52 1044.5 H57" stroke="#9a9a9a" stroke-width="1"/><path d="M52 1018.5 H57" stroke="#9a9a9a" stroke-width="1"/><path d="M52 992.5 H57" stroke="#9a9a9a" stroke-width="1"/><path d="M52 966.5 H57" stroke="#9a9a9a" stroke-width="1"/><path d="M52 940.5 H57" stroke="#9a9a9a" stroke-width="1"/><path d="M55 1139.5 H57" stroke="#9a9a9a" stroke-width="1"/><path d="M55 1131.5 H57" stroke="#9a9a9a" stroke-width="1"/><path d="M55 1113.5 H57" stroke="#9a9a9a" stroke-width="1"/><path d="M55 1105.5 H57" stroke="#9a9a9a" stroke-width="1"/><path d="M55 1087.5 H57" stroke="#9a9a9a" stroke-width="1"/><path d="M55 1079.5 H57" stroke="#9a9a9a" stroke-width="1"/><path d="M55 1061.5 H57" stroke="#9a9a9a" stroke-width="1"/><path d="M55 1053.5 H57" stroke="#9a9a9a" stroke-width="1"/><path d="M55 1035.5 H57" stroke="#9a9a9a" stroke-width="1"/><path d="M55 1027.5 H57" stroke="#9a9a9a" stroke-width="1"/><path d="M55 1009.5 H57" stroke="#9a9a9a" stroke-width="1"/><path d="M55 1001.5 H57" stroke="#9a9a9a" stroke-width="1"/><path d="M55 983.5 H57" stroke="#9a9a9a" stroke-width="1"/><path d="M55 975.5 H57" stroke="#9a9a9a" stroke-width="1"/><path d="M55 957.5 H57" stroke="#9a9a9a" stroke-width="1"/><path d="M55 949.5 H57" stroke="#9a9a9a" stroke-width="1"/><text x="44" y="1151.8" font-size="12.7" text-anchor="end" fill="#333">0%</text><text x="44" y="1125.8" font-size="12.7" text-anchor="end" fill="#333">5%</text><text x="44" y="1099.8" font-size="12.7" text-anchor="end" fill="#333">10%</text><text x="44" y="1073.8" font-size="12.7" text-anchor="end" fill="#333">15%</text><text x="44" y="1047.8" font-size="12.7" text-anchor="end" fill="#333">20%</text><text x="44" y="1021.8" font-size="12.7" text-anchor="end" fill="#333">25%</text><text x="44" y="995.8" font-size="12.7" text-anchor="end" fill="#333">30%</text><text x="44" y="969.8" font-size="12.7" text-anchor="end" fill="#333">35%</text><text x="44" y="943.8" font-size="12.7" text-anchor="end" fill="#333">40%</text><path d="M223.5 1149 V1154" stroke="#9a9a9a" stroke-width="1"/><text x="222.8" y="1170" font-size="12.7" text-anchor="middle" fill="#333">7:00:00 PM</text><path d="M620.5 1149 V1154" stroke="#9a9a9a" stroke-width="1"/><text x="619.7" y="1170" font-size="12.7" text-anchor="middle" fill="#333">7:00:00 PM</text><path d="M914 1075.5 H1696" stroke="#dcdcdc" stroke-width="1"/><path d="M914 1036.5 H1696" stroke="#dcdcdc" stroke-width="1"/><path d="M914 997.5 H1696" stroke="#dcdcdc" stroke-width="1"/><path d="M914 957.5 H1696" stroke="#dcdcdc" stroke-width="1"/><path d="M914 1114 L914 952.4 L1693.3 952.4 L1693.3 1114 Z" fill="#7b68ea"/><path d="M913.7 1114 L913.7 984.4 L916.7 980.7 L920.4 980.3 L925.6 1020.0 L929.3 978.8 L937.4 978.8 L941.6 1028.9 L946.3 974.4 L954.4 974.8 L958.1 978.5 L970.0 978.2 L974.4 985.2 L978.9 985.2 L982.6 953.3 L986.3 953.3 L990.7 1011.9 L1003.3 1011.9 L1007.0 996.0 L1011.5 996.0 L1015.9 978.8 L1019.6 978.2 L1024.1 954.1 L1069.3 954.1 L1073.0 1011.1 L1077.4 994.8 L1081.9 953.0 L1085.6 953.0 L1089.3 1018.1 L1102.6 1018.1 L1106.3 1014.1 L1105.9 1014.1 L1110.4 1009.3 L1122.2 1008.9 L1126.7 999.3 L1131.1 997.0 L1135.6 997.0 L1138.8 955.6 L1143.0 996.3 L1151.1 994.1 L1155.6 1063.7 L1160.0 1012.9 L1167.4 1012.9 L1171.9 1082.2 L1180.0 953.0 L1183.7 953.0 L1188.1 1006.7 L1200.7 1007.0 L1205.2 1004.4 L1208.9 1003.0 L1213.3 952.7 L1217.0 952.7 L1221.5 983.3 L1228.1 982.5 L1233.3 1012.6 L1237.8 964.4 L1245.9 963.0 L1249.6 962.2 L1254.1 978.5 L1265.9 978.5 L1270.4 981.2 L1274.8 981.2 L1279.3 953.0 L1285.9 953.0 L1291.1 982.2 L1298.9 982.2 L1303.3 1072.6 L1307.5 984.1 L1315.2 984.1 L1319.6 991.1 L1324.1 987.1 L1328.5 986.2 L1337.4 983.3 L1347.8 982.2 L1352.2 980.7 L1364.1 980.0 L1368.5 978.2 L1373.0 977.8 L1378.1 953.0 L1381.1 953.0 L1384.8 1013.3 L1393.7 1007.4 L1397.4 1006.4 L1401.9 1010.4 L1405.6 1010.4 L1410.0 978.2 L1414.1 978.2 L1418.6 954.1 L1430.0 953.8 L1434.4 997.0 L1447.0 994.8 L1451.5 1017.0 L1455.2 1009.6 L1463.3 1006.7 L1467.8 1010.4 L1479.6 1010.4 L1484.1 1013.3 L1483.7 1013.3 L1500.7 1013.3 L1505.2 1003.0 L1512.6 1000.7 L1516.7 1063.0 L1521.5 999.6 L1528.9 998.1 L1533.3 1000.7 L1542.2 994.1 L1545.2 994.1 L1549.6 1005.2 L1561.5 1005.2 L1565.9 1001.0 L1574.8 1000.7 L1578.5 953.0 L1582.2 1017.8 L1603.0 1018.5 L1607.4 952.7 L1611.1 952.7 L1615.1 991.1 L1620.0 983.3 L1627.4 980.0 L1631.9 966.4 L1643.7 966.4 L1648.1 983.7 L1656.3 983.3 L1660.7 981.5 L1664.4 981.5 L1668.9 991.1 L1672.6 952.7 L1677.0 952.7 L1680.7 1009.6 L1688.9 1006.7 L1693.3 1005.9 L1693.3 1114 Z" fill="#c3b9f3"/><path d="M913.7 1114 L913.7 990.4 L916.7 986.2 L920.4 986.2 L925.6 1021.2 L929.3 981.8 L937.4 981.8 L941.6 1030.4 L946.3 978.2 L954.4 978.2 L958.1 980.0 L970.0 980.0 L974.4 987.4 L978.9 987.4 L982.6 953.3 L986.3 953.3 L990.7 1013.6 L1003.3 1013.6 L1007.0 1004.9 L1011.5 1004.9 L1015.9 987.1 L1019.6 987.1 L1024.1 954.4 L1069.3 954.4 L1073.0 1014.5 L1077.4 1000.0 L1081.9 953.3 L1085.6 953.3 L1089.3 1019.3 L1102.6 1019.3 L1106.3 1015.6 L1105.9 1015.6 L1110.4 1017.8 L1122.2 1017.8 L1126.7 1008.1 L1131.1 1005.9 L1135.6 1005.9 L1138.8 956.3 L1143.0 1005.2 L1151.1 1003.0 L1155.6 1065.2 L1160.0 1021.5 L1167.4 1021.5 L1171.9 1083.7 L1180.0 953.3 L1183.7 953.3 L1188.1 1008.4 L1200.7 1008.4 L1205.2 1005.9 L1208.9 1004.4 L1213.3 953.0 L1217.0 953.0 L1221.5 985.6 L1228.1 984.9 L1233.3 1014.1 L1237.8 969.6 L1245.9 967.1 L1249.6 967.1 L1254.1 983.7 L1274.8 983.7 L1279.3 953.3 L1285.9 953.3 L1291.1 985.6 L1298.9 985.6 L1303.3 1074.1 L1307.5 987.7 L1315.2 987.7 L1319.6 999.3 L1324.1 995.1 L1328.5 994.5 L1337.4 989.6 L1347.8 988.1 L1352.2 985.2 L1364.1 984.7 L1373.0 985.6 L1378.1 953.3 L1381.1 953.3 L1384.8 1014.1 L1393.7 1008.1 L1397.4 1007.4 L1401.9 1014.1 L1405.6 1014.8 L1410.0 978.5 L1414.1 978.5 L1418.6 954.4 L1430.0 954.1 L1434.4 1005.9 L1447.0 1003.7 L1451.5 1026.7 L1455.2 1017.8 L1463.3 1015.6 L1467.8 1019.3 L1479.6 1019.6 L1484.1 1014.8 L1483.7 1015.3 L1500.7 1014.8 L1505.2 1011.9 L1512.6 1009.9 L1516.7 1064.4 L1521.5 1002.2 L1528.9 999.3 L1533.3 1003.7 L1542.2 996.3 L1545.2 996.3 L1549.6 1014.8 L1561.5 1014.8 L1565.9 1009.9 L1574.8 1009.6 L1578.5 953.3 L1582.2 1018.5 L1603.0 1019.3 L1607.4 953.0 L1611.1 953.0 L1615.1 992.1 L1620.0 985.9 L1627.4 986.2 L1631.9 969.9 L1643.7 969.9 L1648.1 989.6 L1656.3 988.9 L1660.7 986.2 L1664.4 986.2 L1668.9 991.6 L1672.6 953.0 L1677.0 953.0 L1680.7 1010.8 L1688.9 1007.4 L1693.3 1007.0 L1693.3 1114 Z" fill="#c55f05"/><path d="M913.5 1114.5 V936.5 H1696.5 V1114.5 Z" fill="none" stroke="#a0a0a0"/><path d="M908 1114.5 H913" stroke="#9a9a9a" stroke-width="1"/><path d="M908 1075.5 H913" stroke="#9a9a9a" stroke-width="1"/><path d="M908 1036.5 H913" stroke="#9a9a9a" stroke-width="1"/><path d="M908 997.5 H913" stroke="#9a9a9a" stroke-width="1"/><path d="M908 957.5 H913" stroke="#9a9a9a" stroke-width="1"/><path d="M911 1101.5 H913" stroke="#9a9a9a" stroke-width="1"/><path d="M911 1088.5 H913" stroke="#9a9a9a" stroke-width="1"/><path d="M911 1062.5 H913" stroke="#9a9a9a" stroke-width="1"/><path d="M911 1049.5 H913" stroke="#9a9a9a" stroke-width="1"/><path d="M911 1023.5 H913" stroke="#9a9a9a" stroke-width="1"/><path d="M911 1010.5 H913" stroke="#9a9a9a" stroke-width="1"/><path d="M911 984.5 H913" stroke="#9a9a9a" stroke-width="1"/><path d="M911 970.5 H913" stroke="#9a9a9a" stroke-width="1"/><path d="M911 944.5 H913" stroke="#9a9a9a" stroke-width="1"/><text x="902" y="961.1999999999999" font-size="12.7" text-anchor="end" fill="#333">2,000</text><text x="902" y="1000.3499999999999" font-size="12.7" text-anchor="end" fill="#333">1,500</text><text x="902" y="1039.5" font-size="12.7" text-anchor="end" fill="#333">1,000</text><text x="902" y="1078.6499999999999" font-size="12.7" text-anchor="end" fill="#333">500</text><text x="902" y="1117.8" font-size="12.7" text-anchor="end" fill="#333">0</text><path d="M1078.5 1115 V1120" stroke="#9a9a9a" stroke-width="1"/><text x="1078" y="1136" font-size="12.7" text-anchor="middle" fill="#333">7:00:00 PM</text><path d="M1472.5 1115 V1120" stroke="#9a9a9a" stroke-width="1"/><text x="1471.5" y="1136" font-size="12.7" text-anchor="middle" fill="#333">7:00:00 PM</text><path d="M1065.8 1162.5 L1071.3 1152.5 L1076.8 1162.5 Z" fill="#f0c8a0"/><text x="1079.5" y="1161.6" font-size="12.7" text-anchor="start" fill="#333">Unused Disk</text><path d="M1158.5 1162.5 L1164.0 1152.5 L1169.5 1162.5 Z" fill="#c55f05"/><text x="1172.5" y="1161.6" font-size="12.7" text-anchor="start" fill="#333">Used Disk</text><path d="M1237.4 1162.5 L1242.9 1152.5 L1248.4 1162.5 Z" fill="#f5e3d2"/><text x="1251.2" y="1161.6" font-size="12.7" text-anchor="start" fill="#333">Empty Disk</text><path d="M1323.3 1162.5 L1328.8 1152.5 L1334.3 1162.5 Z" fill="#c3b9f3"/><text x="1337" y="1161.6" font-size="12.7" text-anchor="start" fill="#333">Empty Buffer</text><path d="M1419.8 1162.5 L1425.3 1152.5 L1430.8 1162.5 Z" fill="#7b68ea"/><text x="1433.5" y="1161.6" font-size="12.7" text-anchor="start" fill="#333">Used Buffer</text><path d="M1754 1084.5 H2538" stroke="#dcdcdc" stroke-width="1"/><path d="M1754 1053.5 H2538" stroke="#dcdcdc" stroke-width="1"/><path d="M1754 1022.5 H2538" stroke="#dcdcdc" stroke-width="1"/><path d="M1754 992.5 H2538" stroke="#dcdcdc" stroke-width="1"/><path d="M1754 962.5 H2538" stroke="#dcdcdc" stroke-width="1"/><path d="M1753.7 1114 L1753.7 1011.1 L1757.4 994.8 L1761.9 1015.6 L1765.6 1031.1 L1769.6 980.7 L1773.4 1035.6 L1777.4 1008.1 L1781.9 1004.9 L1785.9 974.1 L1790.0 1043.0 L1794.1 991.1 L1798.6 980.7 L1802.6 1020.0 L1806.3 1022.2 L1810.4 1020.0 L1814.4 1003.4 L1818.4 1004.4 L1822.6 1009.6 L1827.0 1017.8 L1831.2 996.3 L1835.6 1017.8 L1839.3 988.6 L1843.6 1021.2 L1847.8 1001.5 L1851.8 987.4 L1856.4 1002.2 L1860.4 1022.2 L1864.1 997.0 L1868.5 1019.3 L1872.7 1024.4 L1876.4 1004.0 L1880.8 1021.9 L1884.8 1021.9 L1888.8 1007.4 L1893.0 1000.7 L1897.1 984.1 L1901.1 1008.1 L1905.3 1004.4 L1909.6 1042.2 L1913.7 994.8 L1917.7 1014.1 L1921.9 1018.2 L1925.9 996.3 L1930.0 1007.0 L1934.4 987.4 L1938.4 1113.3 L1942.3 996.3 L1946.3 1022.2 L1950.4 1005.2 L1954.5 1016.3 L1958.8 1000.4 L1963.0 1004.9 L1967.4 1017.0 L1971.1 1037.5 L1975.6 981.2 L1979.6 1015.3 L1983.4 984.1 L1987.7 996.3 L1991.9 1052.3 L1995.6 1019.3 L2000.0 1010.1 L2004.4 1017.3 L2008.4 1034.8 L2012.6 1009.6 L2016.7 995.6 L2020.4 971.4 L2024.7 996.3 L2028.9 1021.2 L2032.9 1025.9 L2037.0 997.8 L2041.5 1015.3 L2045.5 1007.4 L2049.6 1034.5 L2053.8 1017.0 L2057.8 952.6 L2061.8 1023.7 L2065.9 1017.8 L2069.9 1019.3 L2074.1 1001.2 L2078.5 1007.4 L2082.5 1000.4 L2086.7 1019.3 L2090.7 1004.0 L2094.8 1027.4 L2098.8 1008.4 L2103.0 996.6 L2107.1 1012.3 L2111.4 1012.6 L2115.6 1033.3 L2119.6 1113.3 L2123.4 1001.2 L2127.7 1023.3 L2131.9 1008.1 L2136.3 1016.3 L2139.9 1020.7 L2144.1 1015.6 L2148.5 991.1 L2152.5 1005.2 L2156.7 1022.2 L2160.7 992.6 L2164.8 1012.6 L2168.8 1004.4 L2173.3 1011.4 L2177.1 1030.7 L2181.1 1016.3 L2185.1 1020.7 L2189.3 1005.2 L2193.4 1017.8 L2197.4 996.0 L2201.9 995.3 L2205.9 1013.3 L2210.0 997.8 L2214.1 1014.8 L2218.4 1016.3 L2222.6 990.4 L2226.6 1035.6 L2230.7 1027.4 L2234.7 1009.9 L2238.9 1012.3 L2243.0 1011.4 L2247.0 1035.6 L2251.2 983.7 L2255.2 1001.0 L2259.6 994.8 L2263.6 1040.0 L2267.8 1000.0 L2271.9 996.3 L2275.9 1019.3 L2279.9 1014.5 L2284.4 1023.0 L2288.5 1020.0 L2292.5 1018.5 L2296.7 1025.9 L2300.7 1020.3 L2304.8 1022.2 L2309.0 1027.1 L2313.0 1021.5 L2317.0 1008.1 L2321.4 1014.4 L2325.6 1009.6 L2329.6 1113.3 L2333.6 1037.0 L2337.5 1020.7 L2341.5 1013.3 L2345.9 1015.2 L2354.1 991.5 L2358.5 997.8 L2362.5 1004.4 L2366.7 999.3 L2370.8 1011.4 L2374.8 1008.9 L2379.0 1006.4 L2383.0 1024.4 L2387.4 1012.6 L2391.1 1001.5 L2395.5 998.5 L2399.5 1022.7 L2403.7 1011.8 L2407.7 1001.5 L2411.8 1032.6 L2416.0 1037.5 L2420.0 1001.5 L2424.4 1020.7 L2428.4 1020.7 L2432.6 991.1 L2436.6 1020.3 L2440.7 1012.6 L2444.9 1006.7 L2448.9 1001.5 L2453.3 1006.7 L2457.3 1021.2 L2461.5 1007.4 L2465.5 1062.9 L2469.3 998.1 L2473.6 994.5 L2477.8 1000.0 L2481.8 995.5 L2485.9 1005.2 L2490.0 1001.0 L2494.0 999.0 L2498.5 990.1 L2502.5 1030.4 L2506.6 1113.3 L2510.6 992.6 L2514.8 1009.6 L2518.8 1031.8 L2527.4 985.6 L2531.5 1009.3 L2535.1 1009.9 L2535.1 1114 Z" fill="#8064a2" stroke="#5f6b7a" stroke-width="0.8" stroke-linejoin="round"/><path d="M1753.7 1114 L1753.7 1061.5 L1757.4 1053.3 L1761.9 1063.0 L1765.6 1070.4 L1769.6 1046.7 L1773.4 1073.3 L1777.4 1059.7 L1781.9 1057.8 L1785.9 1043.7 L1790.0 1078.5 L1794.1 1050.4 L1798.6 1046.7 L1802.6 1065.2 L1806.3 1067.4 L1810.4 1065.2 L1814.4 1057.0 L1818.4 1057.8 L1822.6 1060.7 L1827.0 1065.9 L1831.2 1056.3 L1835.6 1066.7 L1839.3 1053.3 L1843.6 1068.6 L1847.8 1059.3 L1851.8 1052.6 L1856.4 1060.0 L1860.4 1068.6 L1864.1 1057.8 L1868.5 1067.4 L1872.7 1070.4 L1876.4 1060.7 L1880.8 1069.3 L1884.8 1069.6 L1888.8 1062.2 L1893.0 1057.8 L1897.1 1050.8 L1901.1 1062.2 L1905.3 1060.7 L1909.6 1079.3 L1913.7 1055.6 L1917.7 1065.6 L1921.9 1067.1 L1925.9 1056.7 L1930.0 1060.7 L1934.4 1053.3 L1938.4 1113.3 L1942.3 1057.8 L1946.3 1068.9 L1950.4 1060.0 L1954.5 1065.6 L1958.8 1058.5 L1963.0 1060.7 L1967.4 1067.4 L1971.1 1076.3 L1975.6 1049.6 L1979.6 1065.2 L1983.4 1049.9 L1987.7 1057.0 L1991.9 1083.0 L1995.6 1066.7 L2000.0 1062.7 L2004.4 1067.1 L2008.4 1076.0 L2012.6 1064.4 L2016.7 1055.6 L2020.4 1044.9 L2024.7 1057.0 L2028.9 1067.1 L2032.9 1071.1 L2037.0 1057.8 L2041.5 1065.2 L2045.5 1061.5 L2049.6 1074.8 L2053.8 1064.1 L2057.8 1034.1 L2061.8 1067.4 L2065.9 1064.7 L2069.9 1065.6 L2074.1 1057.0 L2078.5 1059.7 L2082.5 1057.0 L2086.7 1065.2 L2090.7 1058.5 L2094.8 1068.1 L2098.8 1060.0 L2103.0 1054.8 L2107.1 1061.5 L2111.4 1062.2 L2115.6 1072.6 L2119.6 1113.3 L2123.4 1057.8 L2127.7 1067.4 L2131.9 1060.3 L2136.3 1062.7 L2139.9 1066.2 L2144.1 1062.7 L2148.5 1052.9 L2152.5 1060.0 L2156.7 1066.7 L2160.7 1053.3 L2164.8 1062.2 L2168.8 1058.5 L2173.3 1062.2 L2177.1 1070.4 L2181.1 1063.7 L2185.1 1065.9 L2189.3 1059.3 L2193.4 1063.7 L2197.4 1054.1 L2201.9 1053.8 L2205.9 1061.5 L2210.0 1055.3 L2214.1 1063.0 L2218.4 1065.2 L2222.6 1054.1 L2226.6 1075.6 L2230.7 1072.6 L2234.7 1063.7 L2238.9 1064.1 L2243.0 1063.0 L2247.0 1076.3 L2251.2 1050.4 L2255.2 1058.5 L2259.6 1056.3 L2263.6 1078.5 L2267.8 1058.5 L2271.9 1056.3 L2275.9 1066.7 L2279.9 1065.6 L2284.4 1069.6 L2288.5 1068.6 L2292.5 1067.7 L2296.7 1071.6 L2300.7 1067.7 L2304.8 1068.9 L2309.0 1071.6 L2313.0 1068.6 L2317.0 1062.2 L2321.4 1064.4 L2325.6 1062.2 L2329.6 1113.3 L2333.6 1077.0 L2337.5 1067.4 L2341.5 1064.4 L2345.9 1065.9 L2354.1 1054.1 L2358.5 1057.0 L2362.5 1060.7 L2366.7 1058.5 L2370.8 1063.2 L2374.8 1062.2 L2379.0 1061.8 L2383.0 1069.6 L2387.4 1064.4 L2391.1 1057.8 L2395.5 1057.0 L2399.5 1068.1 L2403.7 1063.7 L2407.7 1059.2 L2411.8 1074.1 L2416.0 1076.0 L2420.0 1059.2 L2424.4 1067.4 L2428.4 1067.7 L2432.6 1054.4 L2436.6 1067.4 L2440.7 1063.7 L2444.9 1060.7 L2448.9 1057.8 L2453.3 1059.2 L2457.3 1066.2 L2461.5 1060.0 L2465.5 1087.4 L2469.3 1055.5 L2473.6 1052.6 L2477.8 1056.3 L2481.8 1054.1 L2485.9 1058.5 L2490.0 1056.3 L2494.0 1055.5 L2498.5 1050.8 L2502.5 1070.4 L2506.6 1113.3 L2510.6 1054.8 L2514.8 1061.5 L2518.8 1071.8 L2527.4 1049.3 L2531.5 1060.3 L2535.1 1060.3 L2535.1 1114 Z" fill="#4f81bd" stroke="#5f6b7a" stroke-width="0.8" stroke-linejoin="round"/><path d="M1753.5 1114.5 V936.5 H2538.5 V1114.5 Z" fill="none" stroke="#a0a0a0"/><path d="M1748 1114.5 H1753" stroke="#9a9a9a" stroke-width="1"/><path d="M1748 1084.5 H1753" stroke="#9a9a9a" stroke-width="1"/><path d="M1748 1053.5 H1753" stroke="#9a9a9a" stroke-width="1"/><path d="M1748 1022.5 H1753" stroke="#9a9a9a" stroke-width="1"/><path d="M1748 992.5 H1753" stroke="#9a9a9a" stroke-width="1"/><path d="M1748 962.5 H1753" stroke="#9a9a9a" stroke-width="1"/><path d="M1751 1104.5 H1753" stroke="#9a9a9a" stroke-width="1"/><path d="M1751 1094.5 H1753" stroke="#9a9a9a" stroke-width="1"/><path d="M1751 1073.5 H1753" stroke="#9a9a9a" stroke-width="1"/><path d="M1751 1063.5 H1753" stroke="#9a9a9a" stroke-width="1"/><path d="M1751 1043.5 H1753" stroke="#9a9a9a" stroke-width="1"/><path d="M1751 1033.5 H1753" stroke="#9a9a9a" stroke-width="1"/><path d="M1751 1012.5 H1753" stroke="#9a9a9a" stroke-width="1"/><path d="M1751 1002.5 H1753" stroke="#9a9a9a" stroke-width="1"/><path d="M1751 982.5 H1753" stroke="#9a9a9a" stroke-width="1"/><path d="M1751 972.5 H1753" stroke="#9a9a9a" stroke-width="1"/><path d="M1751 951.5 H1753" stroke="#9a9a9a" stroke-width="1"/><path d="M1751 941.5 H1753" stroke="#9a9a9a" stroke-width="1"/><text x="1742" y="965.3" font-size="12.7" text-anchor="end" fill="#333">250</text><text x="1742" y="995.8" font-size="12.7" text-anchor="end" fill="#333">200</text><text x="1742" y="1026.3" font-size="12.7" text-anchor="end" fill="#333">150</text><text x="1742" y="1056.8" font-size="12.7" text-anchor="end" fill="#333">100</text><text x="1742" y="1087.3" font-size="12.7" text-anchor="end" fill="#333">50</text><text x="1742" y="1117.8" font-size="12.7" text-anchor="end" fill="#333">0</text><path d="M1918.5 1115 V1120" stroke="#9a9a9a" stroke-width="1"/><text x="1917.8" y="1136" font-size="12.7" text-anchor="middle" fill="#333">7:00:00 PM</text><path d="M2312.5 1115 V1120" stroke="#9a9a9a" stroke-width="1"/><text x="2312.4" y="1136" font-size="12.7" text-anchor="middle" fill="#333">7:00:00 PM</text><path d="M1898.2 1162.5 L1903.7 1152.5 L1909.2 1162.5 Z" fill="#b4423e"/><text x="1912.6" y="1161.6" font-size="12.7" text-anchor="start" fill="#333">User Scans</text><path d="M1983.6 1162.5 L1989.1 1152.5 L1994.6 1162.5 Z" fill="#4f81bd"/><text x="1997.4" y="1161.6" font-size="12.7" text-anchor="start" fill="#333">User Seeks</text><path d="M2069.9 1162.5 L2075.4 1152.5 L2080.9 1162.5 Z" fill="#9bbb59"/><text x="2083.6" y="1161.6" font-size="12.7" text-anchor="start" fill="#333">User Lookups</text><path d="M2169.7 1162.5 L2175.2 1152.5 L2180.7 1162.5 Z" fill="#8064a2"/><text x="2182.9" y="1161.6" font-size="12.7" text-anchor="start" fill="#333">User Updates</text><path d="M2268.5 1162.5 L2274.0 1152.5 L2279.5 1162.5 Z" fill="#4bacc6"/><text x="2282.3" y="1161.6" font-size="12.7" text-anchor="start" fill="#333">System Scans</text></svg></body></html>
